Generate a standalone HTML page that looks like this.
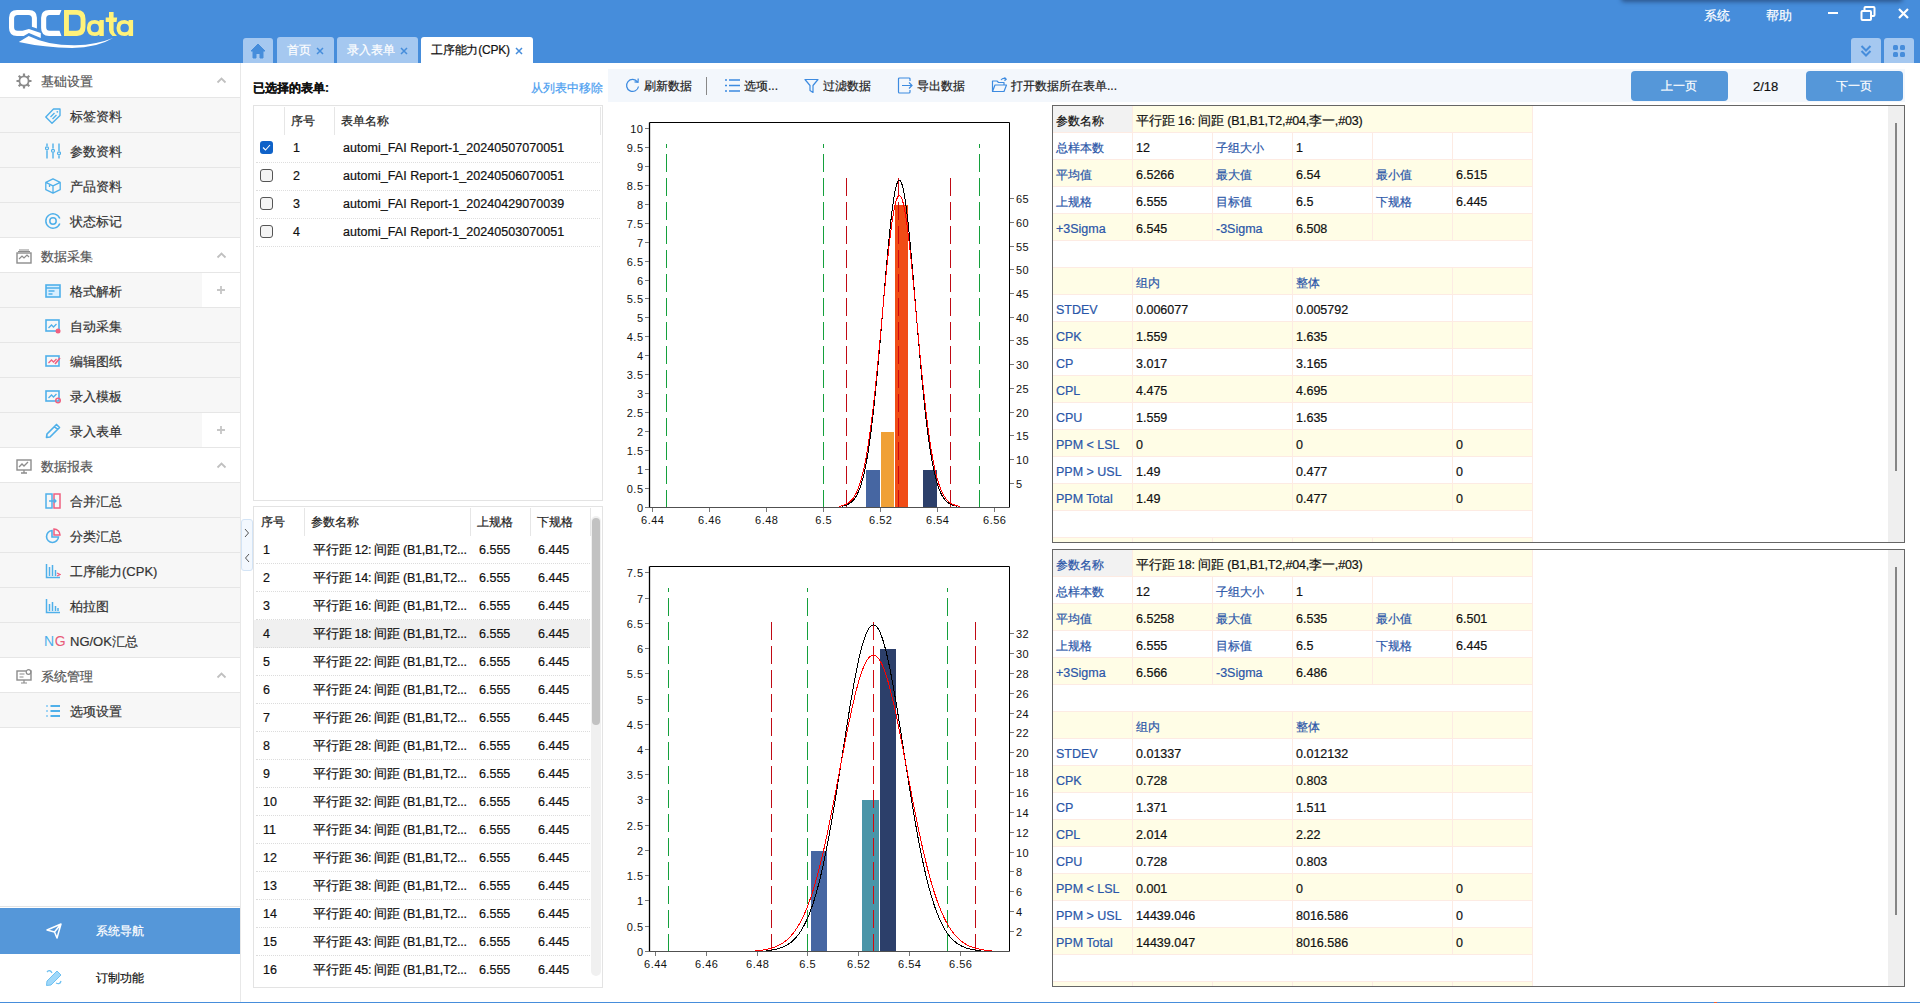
<!DOCTYPE html><html><head><meta charset="utf-8"><style>
*{box-sizing:border-box;margin:0;padding:0}
html,body{width:1920px;height:1003px;overflow:hidden;background:#fff;font-family:"Liberation Sans", sans-serif;color:#222}
.a{position:absolute}
.t{position:absolute;white-space:nowrap;line-height:1;-webkit-text-stroke:0.2px currentColor}
</style></head><body>

<div class="a" style="left:0;top:0;width:1920px;height:63px;background:#468ddb"></div>
<div class="a" style="left:1622px;top:-6px;width:280px;height:6px;background:#2f4f7a;border-radius:4px;box-shadow:0 1px 4px 1px rgba(25,45,80,.55)"></div>
<svg class="a" style="left:0;top:0" width="150" height="60" viewBox="0 0 150 60">
<path fill="#fff" fill-rule="evenodd" d="M36.9 28.6 L36.9 17.8 Q36.9 9.9 29 9.9 L17 9.9 Q9 9.9 9 17.8 L9 28 Q9 35.9 17 35.9 L23.7 35.9 L28.9 33.1 L40.8 38 L40.8 33.1 L28.9 29.1 L22.5 30.8 L17.6 30.8 Q14.1 30.8 14.1 27.3 L14.1 18.6 Q14.1 15.1 17.6 15.1 L28.4 15.1 Q31.9 15.1 31.9 18.6 L31.9 26.8 Z"/>
<path fill="#fff" d="M61.5 9.9 L49 9.9 Q41.1 9.9 41.1 17.8 L41.1 28 Q41.1 35.9 49 35.9 L61.5 35.9 L59.5 30.8 L49.7 30.8 Q46.2 30.8 46.2 27.3 L46.2 18.6 Q46.2 15.1 49.7 15.1 L59.5 15.1 Z"/>
<path fill="#fff" d="M18.8 42 L28.7 35.9 Q48 45.5 75 45.3 Q97 44.5 113 37.9 Q97 47.8 72 47.9 Q45 47.8 18.8 42 Z"/>
<g fill="#fff27a" fill-rule="evenodd">
<path d="M64 9.9 L77 9.9 Q85.5 9.9 85.5 19 L85.5 26.8 Q85.5 35.9 77 35.9 L64 35.9 Z M68.9 14.8 L68.9 30.8 L76 30.8 Q80.6 30.8 80.6 26.2 L80.6 19.4 Q80.6 14.8 76 14.8 Z"/>
<path d="M103.8 20 L99.4 20 L99.4 21.5 Q97.5 20 94.8 20 Q86.9 20 86.9 27.95 Q86.9 35.9 94.8 35.9 Q97.5 35.9 99.4 34.4 L99.4 35.9 L103.8 35.9 Z M94.8 23.7 Q90.7 23.7 90.7 27.95 Q90.7 32.2 94.8 32.2 Q98.9 32.2 98.9 27.95 Q98.9 23.7 94.8 23.7 Z"/>
<path d="M109 12 L113.6 12 L113.6 17.4 L117.2 17.4 L116.5 21.9 L113.6 21.9 L113.6 30.5 Q113.6 33 117 35.9 L112.5 35.9 Q109 33 109 30 L109 21.9 L105.7 21.9 L105.7 17.4 L109 17.4 Z"/>
<path d="M133.1 20 L128.6 20 L128.6 21.5 Q126.7 20 124.6 20 Q116.5 20 116.5 27.95 Q116.5 35.9 124.6 35.9 Q126.7 35.9 128.6 34.4 L128.6 35.9 L133.1 35.9 Z M124.6 23.7 Q120.4 23.7 120.4 27.95 Q120.4 32.2 124.6 32.2 Q128.9 32.2 128.9 27.95 Q128.9 23.7 124.6 23.7 Z"/>
</g>
</svg>
<div class="a" style="left:243px;top:38px;width:30px;height:25px;background:#a5c8f0;border-radius:3px 3px 0 0"></div>
<svg class="a" style="left:250px;top:43px" width="16" height="16" viewBox="0 0 16 16"><path d="M8 1 L15 8 L13 8 L13 15 L10 15 L10 10.5 L6 10.5 L6 15 L3 15 L3 8 L1 8 Z" fill="#468ddb" stroke="#468ddb" stroke-width="1" stroke-linejoin="round"/></svg>
<div class="a" style="left:277px;top:37px;width:57px;height:26px;background:#a5c8f0;border-radius:3px 3px 0 0"></div>
<div class="t" style="left:287px;top:44px;font-size:12px;color:#fff">首页</div>
<svg class="a" style="left:316px;top:47px" width="8" height="8" viewBox="0 0 8 8"><path d="M1 1 L7 7 M7 1 L1 7" stroke="#468ddb" stroke-width="1.5"/></svg>
<div class="a" style="left:337px;top:37px;width:81px;height:26px;background:#a5c8f0;border-radius:3px 3px 0 0"></div>
<div class="t" style="left:347px;top:44px;font-size:12px;color:#fff">录入表单</div>
<svg class="a" style="left:400px;top:47px" width="8" height="8" viewBox="0 0 8 8"><path d="M1 1 L7 7 M7 1 L1 7" stroke="#468ddb" stroke-width="1.5"/></svg>
<div class="a" style="left:421px;top:37px;width:112px;height:26px;background:#ffffff;border-radius:3px 3px 0 0"></div>
<div class="t" style="left:431px;top:44px;font-size:12px;color:#111;letter-spacing:-0.2px">工序能力(CPK)</div>
<svg class="a" style="left:515px;top:47px" width="8" height="8" viewBox="0 0 8 8"><path d="M1 1 L7 7 M7 1 L1 7" stroke="#468ddb" stroke-width="1.5"/></svg>
<div class="t" style="left:1704px;top:9px;font-size:13px;color:#fff">系统</div>
<div class="t" style="left:1766px;top:9px;font-size:13px;color:#fff">帮助</div>
<svg class="a" style="left:1820px;top:0" width="100" height="30" viewBox="0 0 100 30">
<rect x="8" y="12" width="10" height="2" fill="#fff"/>
<path d="M44.5 10.5 L44.5 8 Q44.5 7 45.5 7 L53.5 7 Q54.5 7 54.5 8 L54.5 15 Q54.5 16 53.5 16 L51 16" fill="none" stroke="#fff" stroke-width="2"/>
<rect x="41.5" y="11" width="9.5" height="9" rx="1" fill="none" stroke="#fff" stroke-width="2"/>
<path d="M79 9 L88 18 M88 9 L79 18" stroke="#fff" stroke-width="2.2"/>
</svg>
<div class="a" style="left:1851px;top:38px;width:30px;height:25px;background:#a5c8f0;border-radius:3px 3px 0 0"></div>
<div class="a" style="left:1884px;top:38px;width:30px;height:25px;background:#a5c8f0;border-radius:3px 3px 0 0"></div>
<svg class="a" style="left:1851px;top:38px" width="63" height="25" viewBox="0 0 63 25">
<path d="M10.5 8 L15 12.5 L19.5 8 M10.5 13 L15 17.5 L19.5 13" fill="none" stroke="#468ddb" stroke-width="2"/>
<rect x="42" y="7" width="5" height="5" rx="1.5" fill="#468ddb"/><rect x="49" y="7" width="5" height="5" rx="1.5" fill="#468ddb"/>
<rect x="42" y="14" width="5" height="5" rx="1.5" fill="#468ddb"/><rect x="49" y="14" width="5" height="5" rx="1.5" fill="#468ddb"/>
</svg>
<div class="a" style="left:240px;top:63px;width:1px;height:939px;background:#e8e8e8"></div>
<div class="a" style="left:0;top:63px;width:240px;height:35px;background:#ffffff;border-bottom:1px solid #e6e6e6"></div>
<svg class="a" style="left:16px;top:73px" width="16" height="16" viewBox="0 0 16 16"><circle cx="8" cy="8" r="4.6" fill="none" stroke="#8c8c8c" stroke-width="1.8"/><path d="M8 0.5v3M8 12.5v3M0.5 8h3M12.5 8h3M2.7 2.7l2.1 2.1M11.2 11.2l2.1 2.1M13.3 2.7l-2.1 2.1M4.8 11.2l-2.1 2.1" stroke="#8c8c8c" stroke-width="2.2"/></svg>
<div class="t" style="left:41px;top:75px;font-size:13px;color:#555">基础设置</div>
<svg class="a" style="left:216px;top:76px" width="12" height="8" viewBox="0 0 12 8"><path d="M1.5 6.5 L5.5 2.5 L9.5 6.5" fill="none" stroke="#c0c0c0" stroke-width="1.8"/></svg>
<div class="a" style="left:0;top:98px;width:240px;height:35px;background:#f7f7f7;border-bottom:1px solid #e6e6e6"></div>
<svg class="a" style="left:45px;top:108px" width="16" height="16" viewBox="0 0 16 16"><path d="M8.5 1 L15 1 L15 7.5 L7 15.2 L0.8 9 Z" fill="none" stroke="#4fb0ea" stroke-width="1.4" stroke-linejoin="round"/><path d="M5.5 9 L9.5 5 M7.5 11 L11.5 7" stroke="#4fb0ea" stroke-width="1.3"/><circle cx="12.3" cy="3.8" r="0.9" fill="#4fb0ea"/></svg>
<div class="t" style="left:70px;top:110px;font-size:13px;color:#333">标签资料</div>
<div class="a" style="left:0;top:133px;width:240px;height:35px;background:#f7f7f7;border-bottom:1px solid #e6e6e6"></div>
<svg class="a" style="left:45px;top:143px" width="16" height="16" viewBox="0 0 16 16"><path d="M2 0.5v2.5M2 7.5v8M8 0.5v5M8 10v5.5M14 0.5v7.5M14 12.5v3" stroke="#4fb0ea" stroke-width="1.4"/><circle cx="2" cy="5.3" r="1.5" fill="none" stroke="#4fb0ea" stroke-width="1.2"/><circle cx="8" cy="7.8" r="1.5" fill="none" stroke="#4fb0ea" stroke-width="1.2"/><circle cx="14" cy="10.3" r="1.5" fill="none" stroke="#4fb0ea" stroke-width="1.2"/></svg>
<div class="t" style="left:70px;top:145px;font-size:13px;color:#333">参数资料</div>
<div class="a" style="left:0;top:168px;width:240px;height:35px;background:#f7f7f7;border-bottom:1px solid #e6e6e6"></div>
<svg class="a" style="left:45px;top:178px" width="16" height="16" viewBox="0 0 16 16"><path d="M8 0.8 L15.2 4.3 L15.2 11.7 L8 15.2 L0.8 11.7 L0.8 4.3 Z M0.8 4.3 L8 7.8 L15.2 4.3 M8 7.8 L8 15.2 M4.5 6 L4.5 9" fill="none" stroke="#4fb0ea" stroke-width="1.3" stroke-linejoin="round"/></svg>
<div class="t" style="left:70px;top:180px;font-size:13px;color:#333">产品资料</div>
<div class="a" style="left:0;top:203px;width:240px;height:35px;background:#f7f7f7;border-bottom:1px solid #e6e6e6"></div>
<svg class="a" style="left:45px;top:213px" width="16" height="16" viewBox="0 0 16 16"><path d="M14.8 10.5 A7.2 7.2 0 1 1 14.8 5.5" fill="none" stroke="#4fb0ea" stroke-width="1.5"/><circle cx="8" cy="8" r="3.2" fill="none" stroke="#4fb0ea" stroke-width="1.5"/></svg>
<div class="t" style="left:70px;top:215px;font-size:13px;color:#333">状态标记</div>
<div class="a" style="left:0;top:238px;width:240px;height:35px;background:#ffffff;border-bottom:1px solid #e6e6e6"></div>
<svg class="a" style="left:16px;top:248px" width="16" height="16" viewBox="0 0 16 16"><rect x="1" y="5" width="14" height="10" fill="none" stroke="#8c8c8c" stroke-width="1.4"/><path d="M3 2h10M2 3.5h12M3 11l3-3 2 2 3-3 2 2" fill="none" stroke="#8c8c8c" stroke-width="1.2"/></svg>
<div class="t" style="left:41px;top:250px;font-size:13px;color:#555">数据采集</div>
<svg class="a" style="left:216px;top:251px" width="12" height="8" viewBox="0 0 12 8"><path d="M1.5 6.5 L5.5 2.5 L9.5 6.5" fill="none" stroke="#c0c0c0" stroke-width="1.8"/></svg>
<div class="a" style="left:0;top:273px;width:240px;height:35px;background:#f7f7f7;border-bottom:1px solid #e6e6e6"></div>
<svg class="a" style="left:45px;top:283px" width="16" height="16" viewBox="0 0 16 16"><rect x="1" y="2" width="14" height="12" fill="#d8efff" stroke="#4fb0ea" stroke-width="1.6"/><path d="M1 5h14M3.5 8h6M3.5 11h4" stroke="#4fb0ea" stroke-width="1.4"/></svg>
<div class="t" style="left:70px;top:285px;font-size:13px;color:#333">格式解析</div>
<div class="a" style="left:202px;top:273px;width:38px;height:34px;background:#fff"></div>
<svg class="a" style="left:216px;top:285px" width="10" height="10" viewBox="0 0 10 10"><path d="M5 1 V9 M1 5 H9" stroke="#c6c6c6" stroke-width="1.8"/></svg>
<div class="a" style="left:0;top:308px;width:240px;height:35px;background:#f7f7f7;border-bottom:1px solid #e6e6e6"></div>
<svg class="a" style="left:45px;top:318px" width="16" height="16" viewBox="0 0 16 16"><rect x="1" y="2" width="13" height="11" fill="none" stroke="#4fb0ea" stroke-width="1.6"/><path d="M3.5 10l3-3 2 2 3-3" fill="none" stroke="#4fb0ea" stroke-width="1.3"/><circle cx="13" cy="13" r="2.5" fill="#f06080"/></svg>
<div class="t" style="left:70px;top:320px;font-size:13px;color:#333">自动采集</div>
<div class="a" style="left:0;top:343px;width:240px;height:35px;background:#f7f7f7;border-bottom:1px solid #e6e6e6"></div>
<svg class="a" style="left:45px;top:353px" width="16" height="16" viewBox="0 0 16 16"><rect x="1" y="3" width="13" height="10" fill="none" stroke="#4fb0ea" stroke-width="1.6"/><path d="M3.5 10l3-3 2 2 3-3" fill="none" stroke="#f06080" stroke-width="1.3"/><path d="M10 11 L15 5" stroke="#f06080" stroke-width="1.6"/></svg>
<div class="t" style="left:70px;top:355px;font-size:13px;color:#333">编辑图纸</div>
<div class="a" style="left:0;top:378px;width:240px;height:35px;background:#f7f7f7;border-bottom:1px solid #e6e6e6"></div>
<svg class="a" style="left:45px;top:388px" width="16" height="16" viewBox="0 0 16 16"><rect x="1" y="3" width="13" height="10" fill="none" stroke="#4fb0ea" stroke-width="1.6"/><path d="M3.5 10l3-3 2 2 3-3" fill="none" stroke="#4fb0ea" stroke-width="1.3"/><circle cx="13" cy="12.5" r="2.3" fill="none" stroke="#f06080" stroke-width="1.4"/></svg>
<div class="t" style="left:70px;top:390px;font-size:13px;color:#333">录入模板</div>
<div class="a" style="left:0;top:413px;width:240px;height:35px;background:#f7f7f7;border-bottom:1px solid #e6e6e6"></div>
<svg class="a" style="left:45px;top:423px" width="16" height="16" viewBox="0 0 16 16"><path d="M11.5 1.5 L14.5 4.5 L5 14 L1.5 14.5 L2 11 Z M9.5 3.5 L12.5 6.5" fill="none" stroke="#4fb0ea" stroke-width="1.7" stroke-linejoin="round"/></svg>
<div class="t" style="left:70px;top:425px;font-size:13px;color:#333">录入表单</div>
<div class="a" style="left:202px;top:413px;width:38px;height:34px;background:#fff"></div>
<svg class="a" style="left:216px;top:425px" width="10" height="10" viewBox="0 0 10 10"><path d="M5 1 V9 M1 5 H9" stroke="#c6c6c6" stroke-width="1.8"/></svg>
<div class="a" style="left:0;top:448px;width:240px;height:35px;background:#ffffff;border-bottom:1px solid #e6e6e6"></div>
<svg class="a" style="left:16px;top:458px" width="16" height="16" viewBox="0 0 16 16"><rect x="1" y="2" width="14" height="10" fill="none" stroke="#8c8c8c" stroke-width="1.4"/><path d="M3 9l3-3 2 2 4-4M8 12v3M5 15h6" fill="none" stroke="#8c8c8c" stroke-width="1.3"/></svg>
<div class="t" style="left:41px;top:460px;font-size:13px;color:#555">数据报表</div>
<svg class="a" style="left:216px;top:461px" width="12" height="8" viewBox="0 0 12 8"><path d="M1.5 6.5 L5.5 2.5 L9.5 6.5" fill="none" stroke="#c0c0c0" stroke-width="1.8"/></svg>
<div class="a" style="left:0;top:483px;width:240px;height:35px;background:#f7f7f7;border-bottom:1px solid #e6e6e6"></div>
<svg class="a" style="left:45px;top:493px" width="16" height="16" viewBox="0 0 16 16"><rect x="1" y="1" width="6" height="14" fill="none" stroke="#4fb0ea" stroke-width="1.5"/><rect x="9" y="1" width="6" height="14" fill="none" stroke="#f06080" stroke-width="1.5"/><path d="M4 8h7M9 6l2 2-2 2" fill="none" stroke="#4fb0ea" stroke-width="1.3"/></svg>
<div class="t" style="left:70px;top:495px;font-size:13px;color:#333">合并汇总</div>
<div class="a" style="left:0;top:518px;width:240px;height:35px;background:#f7f7f7;border-bottom:1px solid #e6e6e6"></div>
<svg class="a" style="left:45px;top:528px" width="16" height="16" viewBox="0 0 16 16"><path d="M7 2.5 A6 6 0 1 0 13.5 9 L7 9 Z" fill="none" stroke="#4fb0ea" stroke-width="1.6"/><path d="M9 1 A6 6 0 0 1 15 7 L9 7 Z" fill="none" stroke="#f06080" stroke-width="1.5"/></svg>
<div class="t" style="left:70px;top:530px;font-size:13px;color:#333">分类汇总</div>
<div class="a" style="left:0;top:553px;width:240px;height:35px;background:#f7f7f7;border-bottom:1px solid #e6e6e6"></div>
<svg class="a" style="left:45px;top:563px" width="16" height="16" viewBox="0 0 16 16"><path d="M1.5 1v13.5H15" fill="none" stroke="#4fb0ea" stroke-width="1.5"/><path d="M4.5 4v9M7.5 2v11M10.5 7v6" stroke="#4fb0ea" stroke-width="1.5"/><path d="M12 10l3 1.5-3 1.5" fill="none" stroke="#f06080" stroke-width="1.3"/></svg>
<div class="t" style="left:70px;top:565px;font-size:13px;color:#333">工序能力(CPK)</div>
<div class="a" style="left:0;top:588px;width:240px;height:35px;background:#f7f7f7;border-bottom:1px solid #e6e6e6"></div>
<svg class="a" style="left:45px;top:598px" width="16" height="16" viewBox="0 0 16 16"><path d="M1.5 1v13.5H15" fill="none" stroke="#4fb0ea" stroke-width="1.5"/><path d="M4.5 6v7M7.5 4v9M10.5 8v5M13 10v3" stroke="#4fb0ea" stroke-width="1.5"/></svg>
<div class="t" style="left:70px;top:600px;font-size:13px;color:#333">柏拉图</div>
<div class="a" style="left:0;top:623px;width:240px;height:35px;background:#f7f7f7;border-bottom:1px solid #e6e6e6"></div>
<div class="t" style="left:44px;top:634px;font-size:14px;color:#4fb0ea;-webkit-text-stroke:0;letter-spacing:0.5px">N<span style="color:#e85a78">G</span></div>
<div class="t" style="left:70px;top:635px;font-size:13px;color:#333">NG/OK汇总</div>
<div class="a" style="left:0;top:658px;width:240px;height:35px;background:#ffffff;border-bottom:1px solid #e6e6e6"></div>
<svg class="a" style="left:16px;top:668px" width="16" height="16" viewBox="0 0 16 16"><rect x="1" y="3" width="14" height="9" fill="none" stroke="#8c8c8c" stroke-width="1.4"/><path d="M8 12v3M5 15h6M3.5 6h5M3.5 9h4" stroke="#8c8c8c" stroke-width="1.2"/><circle cx="12.5" cy="4" r="2.3" fill="#fff" stroke="#8c8c8c" stroke-width="1.2"/></svg>
<div class="t" style="left:41px;top:670px;font-size:13px;color:#555">系统管理</div>
<svg class="a" style="left:216px;top:671px" width="12" height="8" viewBox="0 0 12 8"><path d="M1.5 6.5 L5.5 2.5 L9.5 6.5" fill="none" stroke="#c0c0c0" stroke-width="1.8"/></svg>
<div class="a" style="left:0;top:693px;width:240px;height:35px;background:#f7f7f7;border-bottom:1px solid #e6e6e6"></div>
<svg class="a" style="left:45px;top:703px" width="16" height="16" viewBox="0 0 16 16"><path d="M5.5 3h9.5M5.5 8h9.5M5.5 13h9.5" stroke="#4fb0ea" stroke-width="1.8"/><path d="M1 3h2M1 8h2M1 13h2" stroke="#9fd4f5" stroke-width="1.8"/></svg>
<div class="t" style="left:70px;top:705px;font-size:13px;color:#333">选项设置</div>
<div class="a" style="left:0;top:906px;width:240px;height:1px;background:#e4e4e4"></div>
<div class="a" style="left:0;top:908px;width:240px;height:46px;background:#5597d9"></div>
<svg class="a" style="left:45px;top:922px" width="18" height="18" viewBox="0 0 18 18"><path d="M2 8 L16 2 L12 16 L9.5 10 Z M9.5 10 L16 2" fill="none" stroke="#fff" stroke-width="1.5" stroke-linejoin="round"/></svg>
<div class="t" style="left:96px;top:925px;font-size:12px;color:#fff">系统导航</div>
<svg class="a" style="left:45px;top:969px" width="18" height="18" viewBox="0 0 18 18"><path d="M12 2 L16 6 L6 16 L1.5 16.5 L2 12 Z" fill="#9fd8fa" stroke="#6fc0f0" stroke-width="1"/><path d="M2 3 Q5 0 7 4 M11 14 Q15 16 16 12" fill="none" stroke="#6fc0f0" stroke-width="1.3"/></svg>
<div class="t" style="left:96px;top:972px;font-size:12px;color:#111">订制功能</div>
<div class="a" style="left:0;top:1002px;width:1920px;height:1px;background:#468ddb"></div>
<div class="a" style="left:1714px;top:1002px;width:3px;height:1px;background:#f06030"></div>
<div class="t" style="left:253px;top:82px;font-size:12px;font-weight:bold;color:#111">已选择的表单:</div>
<div class="t" style="left:531px;top:82px;font-size:12px;color:#4a9ef0">从列表中移除</div>
<div class="a" style="left:253px;top:105px;width:350px;height:396px;border:1px solid #e3e3e3"></div>
<div class="a" style="left:284px;top:107px;width:1px;height:28px;background:#e6e6e6"></div>
<div class="a" style="left:334px;top:107px;width:1px;height:28px;background:#e6e6e6"></div>
<div class="a" style="left:600px;top:107px;width:1px;height:28px;background:#e6e6e6"></div>
<div class="t" style="left:291px;top:115px;font-size:12px;color:#222">序号</div>
<div class="t" style="left:341px;top:115px;font-size:12px;color:#222">表单名称</div>
<div class="a" style="left:260px;top:141px;width:13px;height:13px;background:#0f62c8;border-radius:3px"></div>
<svg class="a" style="left:260px;top:141px" width="13" height="13" viewBox="0 0 13 13"><path d="M3 6.5 L5.5 9 L10 4" fill="none" stroke="#fff" stroke-width="1.1"/></svg>
<div class="t" style="left:293px;top:142px;font-size:12.5px;color:#111">1</div>
<div class="t" style="left:343px;top:142px;font-size:12.5px;color:#111;letter-spacing:0.05px">automi_FAI Report-1_20240507070051</div>
<div class="a" style="left:256px;top:162px;width:344px;height:0;border-top:1px dotted #dedede"></div>
<div class="a" style="left:260px;top:169px;width:13px;height:13px;background:#f4f4f4;border:1px solid #555;border-radius:3px"></div>
<div class="t" style="left:293px;top:170px;font-size:12.5px;color:#111">2</div>
<div class="t" style="left:343px;top:170px;font-size:12.5px;color:#111;letter-spacing:0.05px">automi_FAI Report-1_20240506070051</div>
<div class="a" style="left:256px;top:190px;width:344px;height:0;border-top:1px dotted #dedede"></div>
<div class="a" style="left:260px;top:197px;width:13px;height:13px;background:#f4f4f4;border:1px solid #555;border-radius:3px"></div>
<div class="t" style="left:293px;top:198px;font-size:12.5px;color:#111">3</div>
<div class="t" style="left:343px;top:198px;font-size:12.5px;color:#111;letter-spacing:0.05px">automi_FAI Report-1_20240429070039</div>
<div class="a" style="left:256px;top:218px;width:344px;height:0;border-top:1px dotted #dedede"></div>
<div class="a" style="left:260px;top:225px;width:13px;height:13px;background:#f4f4f4;border:1px solid #555;border-radius:3px"></div>
<div class="t" style="left:293px;top:226px;font-size:12.5px;color:#111">4</div>
<div class="t" style="left:343px;top:226px;font-size:12.5px;color:#111;letter-spacing:0.05px">automi_FAI Report-1_20240503070051</div>
<div class="a" style="left:256px;top:246px;width:344px;height:0;border-top:1px dotted #dedede"></div>
<div class="a" style="left:253px;top:506px;width:350px;height:482px;border:1px solid #e3e3e3"></div>
<div class="a" style="left:304px;top:508px;width:1px;height:28px;background:#e6e6e6"></div>
<div class="a" style="left:470px;top:508px;width:1px;height:28px;background:#e6e6e6"></div>
<div class="a" style="left:530px;top:508px;width:1px;height:28px;background:#e6e6e6"></div>
<div class="a" style="left:590px;top:508px;width:1px;height:28px;background:#e6e6e6"></div>
<div class="t" style="left:261px;top:516px;font-size:12px;color:#222">序号</div>
<div class="t" style="left:311px;top:516px;font-size:12px;color:#222">参数名称</div>
<div class="t" style="left:477px;top:516px;font-size:12px;color:#222">上规格</div>
<div class="t" style="left:537px;top:516px;font-size:12px;color:#222">下规格</div>
<div class="t" style="left:263px;top:544px;font-size:12.5px;color:#111">1</div>
<div class="t" style="left:313px;top:544px;font-size:12.5px;color:#111;letter-spacing:-0.25px">平行距 12: 间距 (B1,B1,T2...</div>
<div class="t" style="left:479px;top:544px;font-size:12.5px;color:#111">6.555</div>
<div class="t" style="left:538px;top:544px;font-size:12.5px;color:#111">6.445</div>
<div class="a" style="left:256px;top:563px;width:334px;height:0;border-top:1px dotted #dcdcdc"></div>
<div class="t" style="left:263px;top:572px;font-size:12.5px;color:#111">2</div>
<div class="t" style="left:313px;top:572px;font-size:12.5px;color:#111;letter-spacing:-0.25px">平行距 14: 间距 (B1,B1,T2...</div>
<div class="t" style="left:479px;top:572px;font-size:12.5px;color:#111">6.555</div>
<div class="t" style="left:538px;top:572px;font-size:12.5px;color:#111">6.445</div>
<div class="a" style="left:256px;top:591px;width:334px;height:0;border-top:1px dotted #dcdcdc"></div>
<div class="t" style="left:263px;top:600px;font-size:12.5px;color:#111">3</div>
<div class="t" style="left:313px;top:600px;font-size:12.5px;color:#111;letter-spacing:-0.25px">平行距 16: 间距 (B1,B1,T2...</div>
<div class="t" style="left:479px;top:600px;font-size:12.5px;color:#111">6.555</div>
<div class="t" style="left:538px;top:600px;font-size:12.5px;color:#111">6.445</div>
<div class="a" style="left:256px;top:619px;width:334px;height:0;border-top:1px dotted #dcdcdc"></div>
<div class="a" style="left:254px;top:620px;width:336px;height:28px;background:#f0f0f0"></div>
<div class="t" style="left:263px;top:628px;font-size:12.5px;color:#111">4</div>
<div class="t" style="left:313px;top:628px;font-size:12.5px;color:#111;letter-spacing:-0.25px">平行距 18: 间距 (B1,B1,T2...</div>
<div class="t" style="left:479px;top:628px;font-size:12.5px;color:#111">6.555</div>
<div class="t" style="left:538px;top:628px;font-size:12.5px;color:#111">6.445</div>
<div class="a" style="left:256px;top:647px;width:334px;height:0;border-top:1px dotted #dcdcdc"></div>
<div class="t" style="left:263px;top:656px;font-size:12.5px;color:#111">5</div>
<div class="t" style="left:313px;top:656px;font-size:12.5px;color:#111;letter-spacing:-0.25px">平行距 22: 间距 (B1,B1,T2...</div>
<div class="t" style="left:479px;top:656px;font-size:12.5px;color:#111">6.555</div>
<div class="t" style="left:538px;top:656px;font-size:12.5px;color:#111">6.445</div>
<div class="a" style="left:256px;top:675px;width:334px;height:0;border-top:1px dotted #dcdcdc"></div>
<div class="t" style="left:263px;top:684px;font-size:12.5px;color:#111">6</div>
<div class="t" style="left:313px;top:684px;font-size:12.5px;color:#111;letter-spacing:-0.25px">平行距 24: 间距 (B1,B1,T2...</div>
<div class="t" style="left:479px;top:684px;font-size:12.5px;color:#111">6.555</div>
<div class="t" style="left:538px;top:684px;font-size:12.5px;color:#111">6.445</div>
<div class="a" style="left:256px;top:703px;width:334px;height:0;border-top:1px dotted #dcdcdc"></div>
<div class="t" style="left:263px;top:712px;font-size:12.5px;color:#111">7</div>
<div class="t" style="left:313px;top:712px;font-size:12.5px;color:#111;letter-spacing:-0.25px">平行距 26: 间距 (B1,B1,T2...</div>
<div class="t" style="left:479px;top:712px;font-size:12.5px;color:#111">6.555</div>
<div class="t" style="left:538px;top:712px;font-size:12.5px;color:#111">6.445</div>
<div class="a" style="left:256px;top:731px;width:334px;height:0;border-top:1px dotted #dcdcdc"></div>
<div class="t" style="left:263px;top:740px;font-size:12.5px;color:#111">8</div>
<div class="t" style="left:313px;top:740px;font-size:12.5px;color:#111;letter-spacing:-0.25px">平行距 28: 间距 (B1,B1,T2...</div>
<div class="t" style="left:479px;top:740px;font-size:12.5px;color:#111">6.555</div>
<div class="t" style="left:538px;top:740px;font-size:12.5px;color:#111">6.445</div>
<div class="a" style="left:256px;top:759px;width:334px;height:0;border-top:1px dotted #dcdcdc"></div>
<div class="t" style="left:263px;top:768px;font-size:12.5px;color:#111">9</div>
<div class="t" style="left:313px;top:768px;font-size:12.5px;color:#111;letter-spacing:-0.25px">平行距 30: 间距 (B1,B1,T2...</div>
<div class="t" style="left:479px;top:768px;font-size:12.5px;color:#111">6.555</div>
<div class="t" style="left:538px;top:768px;font-size:12.5px;color:#111">6.445</div>
<div class="a" style="left:256px;top:787px;width:334px;height:0;border-top:1px dotted #dcdcdc"></div>
<div class="t" style="left:263px;top:796px;font-size:12.5px;color:#111">10</div>
<div class="t" style="left:313px;top:796px;font-size:12.5px;color:#111;letter-spacing:-0.25px">平行距 32: 间距 (B1,B1,T2...</div>
<div class="t" style="left:479px;top:796px;font-size:12.5px;color:#111">6.555</div>
<div class="t" style="left:538px;top:796px;font-size:12.5px;color:#111">6.445</div>
<div class="a" style="left:256px;top:815px;width:334px;height:0;border-top:1px dotted #dcdcdc"></div>
<div class="t" style="left:263px;top:824px;font-size:12.5px;color:#111">11</div>
<div class="t" style="left:313px;top:824px;font-size:12.5px;color:#111;letter-spacing:-0.25px">平行距 34: 间距 (B1,B1,T2...</div>
<div class="t" style="left:479px;top:824px;font-size:12.5px;color:#111">6.555</div>
<div class="t" style="left:538px;top:824px;font-size:12.5px;color:#111">6.445</div>
<div class="a" style="left:256px;top:843px;width:334px;height:0;border-top:1px dotted #dcdcdc"></div>
<div class="t" style="left:263px;top:852px;font-size:12.5px;color:#111">12</div>
<div class="t" style="left:313px;top:852px;font-size:12.5px;color:#111;letter-spacing:-0.25px">平行距 36: 间距 (B1,B1,T2...</div>
<div class="t" style="left:479px;top:852px;font-size:12.5px;color:#111">6.555</div>
<div class="t" style="left:538px;top:852px;font-size:12.5px;color:#111">6.445</div>
<div class="a" style="left:256px;top:871px;width:334px;height:0;border-top:1px dotted #dcdcdc"></div>
<div class="t" style="left:263px;top:880px;font-size:12.5px;color:#111">13</div>
<div class="t" style="left:313px;top:880px;font-size:12.5px;color:#111;letter-spacing:-0.25px">平行距 38: 间距 (B1,B1,T2...</div>
<div class="t" style="left:479px;top:880px;font-size:12.5px;color:#111">6.555</div>
<div class="t" style="left:538px;top:880px;font-size:12.5px;color:#111">6.445</div>
<div class="a" style="left:256px;top:899px;width:334px;height:0;border-top:1px dotted #dcdcdc"></div>
<div class="t" style="left:263px;top:908px;font-size:12.5px;color:#111">14</div>
<div class="t" style="left:313px;top:908px;font-size:12.5px;color:#111;letter-spacing:-0.25px">平行距 40: 间距 (B1,B1,T2...</div>
<div class="t" style="left:479px;top:908px;font-size:12.5px;color:#111">6.555</div>
<div class="t" style="left:538px;top:908px;font-size:12.5px;color:#111">6.445</div>
<div class="a" style="left:256px;top:927px;width:334px;height:0;border-top:1px dotted #dcdcdc"></div>
<div class="t" style="left:263px;top:936px;font-size:12.5px;color:#111">15</div>
<div class="t" style="left:313px;top:936px;font-size:12.5px;color:#111;letter-spacing:-0.25px">平行距 43: 间距 (B1,B1,T2...</div>
<div class="t" style="left:479px;top:936px;font-size:12.5px;color:#111">6.555</div>
<div class="t" style="left:538px;top:936px;font-size:12.5px;color:#111">6.445</div>
<div class="a" style="left:256px;top:955px;width:334px;height:0;border-top:1px dotted #dcdcdc"></div>
<div class="t" style="left:263px;top:964px;font-size:12.5px;color:#111">16</div>
<div class="t" style="left:313px;top:964px;font-size:12.5px;color:#111;letter-spacing:-0.25px">平行距 45: 间距 (B1,B1,T2...</div>
<div class="t" style="left:479px;top:964px;font-size:12.5px;color:#111">6.555</div>
<div class="t" style="left:538px;top:964px;font-size:12.5px;color:#111">6.445</div>
<div class="a" style="left:591px;top:516px;width:10px;height:460px;background:#f0f0f0;border-radius:5px"></div>
<div class="a" style="left:592px;top:518px;width:8px;height:207px;background:#c2c2c2;border-radius:4px"></div>
<div class="a" style="left:241px;top:519px;width:12px;height:52px;background:#f3f8fe;border:1px solid #d3e4f6;border-radius:3px"></div>
<svg class="a" style="left:241px;top:519px" width="12" height="52" viewBox="0 0 12 52"><path d="M4 10 L7.5 14 L4 18 M8 35 L4.5 39 L8 43" fill="none" stroke="#555" stroke-width="1"/></svg>
<div class="a" style="left:608px;top:69px;width:1297px;height:33px;background:#f3f7fc"></div>
<svg class="a" style="left:624px;top:77px" width="17" height="17" viewBox="0 0 17 17"><path d="M13.5 5 A6 6 0 1 0 14.5 9.5" fill="none" stroke="#3d8be0" stroke-width="1.25"/><path d="M10.5 4.8 L14 5.2 L14.2 1.5" fill="none" stroke="#3d8be0" stroke-width="1.25"/></svg>
<div class="t" style="left:644px;top:80px;font-size:12px;color:#222">刷新数据</div>
<div class="a" style="left:706px;top:77px;width:1px;height:18px;background:#888"></div>
<svg class="a" style="left:724px;top:78px" width="17" height="15" viewBox="0 0 17 15"><path d="M5 2h11M5 7.5h11M5 13h11" stroke="#3d8be0" stroke-width="1.4"/><path d="M1 2h2M1 7.5h2M1 13h2" stroke="#3d8be0" stroke-width="1.4"/></svg>
<div class="t" style="left:744px;top:80px;font-size:12px;color:#222">选项...</div>
<svg class="a" style="left:804px;top:78px" width="15" height="16" viewBox="0 0 15 16"><path d="M1 1.5 L14 1.5 L9 7.5 L9 14.5 L6 12.5 L6 7.5 Z" fill="none" stroke="#3d8be0" stroke-width="1.2" stroke-linejoin="round"/></svg>
<div class="t" style="left:823px;top:80px;font-size:12px;color:#222">过滤数据</div>
<svg class="a" style="left:897px;top:77px" width="17" height="17" viewBox="0 0 17 17"><path d="M13 4 L13 2 Q13 1 12 1 L2.5 1 Q1.5 1 1.5 2 L1.5 15 Q1.5 16 2.5 16 L12 16 Q13 16 13 15 L13 13" fill="none" stroke="#3d8be0" stroke-width="1.2"/><path d="M5 8.5h10M12 5.5 L15 8.5 L12 11.5" fill="none" stroke="#3d8be0" stroke-width="1.2"/></svg>
<div class="t" style="left:917px;top:80px;font-size:12px;color:#222">导出数据</div>
<svg class="a" style="left:991px;top:77px" width="17" height="17" viewBox="0 0 17 17"><path d="M1.5 14.5 L1.5 4 L6 4 L7.5 5.5 L13 5.5 L13 7.5 M1.5 14.5 L4 8 L15.5 8 L13 14.5 Z" fill="none" stroke="#3d8be0" stroke-width="1.2" stroke-linejoin="round"/><path d="M10 3 Q12 0.5 15 2 M13.5 0.5 L15.2 2.2 L13.5 3.8" fill="none" stroke="#3d8be0" stroke-width="1.2"/></svg>
<div class="t" style="left:1011px;top:80px;font-size:12px;color:#222">打开数据所在表单...</div>
<div class="a" style="left:1631px;top:71px;width:97px;height:30px;background:#5597d9;border-radius:4px"></div>
<div class="t" style="left:1661px;top:80px;font-size:12px;color:#fff">上一页</div>
<div class="t" style="left:1753px;top:80px;font-size:13px;color:#111">2/18</div>
<div class="a" style="left:1806px;top:71px;width:97px;height:30px;background:#5597d9;border-radius:4px"></div>
<div class="t" style="left:1836px;top:80px;font-size:12px;color:#fff">下一页</div>
<svg class="a" style="left:0;top:0" width="1920" height="1003" viewBox="0 0 1920 1003" font-family="Liberation Sans">
<path d="M649.5 122.5 H1009.5 V507.5" fill="none" stroke="#000" stroke-width="1"/>
<path d="M649.5 122.5 V507.5" fill="none" stroke="#000" stroke-width="1.3"/>
<path d="M645 507.5 H1009.5" fill="none" stroke="#505050" stroke-width="1.2"/>
<path d="M645 507.5 H649" stroke="#777" stroke-width="1"/>
<text x="643.5" y="511.5" text-anchor="end" font-size="11" letter-spacing="0.5" fill="#111">0</text>
<path d="M645 488.5 H649" stroke="#777" stroke-width="1"/>
<text x="643.5" y="492.5" text-anchor="end" font-size="11" letter-spacing="0.5" fill="#111">0.5</text>
<path d="M645 469.5 H649" stroke="#777" stroke-width="1"/>
<text x="643.5" y="473.5" text-anchor="end" font-size="11" letter-spacing="0.5" fill="#111">1</text>
<path d="M645 450.5 H649" stroke="#777" stroke-width="1"/>
<text x="643.5" y="454.5" text-anchor="end" font-size="11" letter-spacing="0.5" fill="#111">1.5</text>
<path d="M645 431.5 H649" stroke="#777" stroke-width="1"/>
<text x="643.5" y="435.5" text-anchor="end" font-size="11" letter-spacing="0.5" fill="#111">2</text>
<path d="M645 412.5 H649" stroke="#777" stroke-width="1"/>
<text x="643.5" y="416.5" text-anchor="end" font-size="11" letter-spacing="0.5" fill="#111">2.5</text>
<path d="M645 393.5 H649" stroke="#777" stroke-width="1"/>
<text x="643.5" y="397.5" text-anchor="end" font-size="11" letter-spacing="0.5" fill="#111">3</text>
<path d="M645 374.5 H649" stroke="#777" stroke-width="1"/>
<text x="643.5" y="378.5" text-anchor="end" font-size="11" letter-spacing="0.5" fill="#111">3.5</text>
<path d="M645 355.5 H649" stroke="#777" stroke-width="1"/>
<text x="643.5" y="359.5" text-anchor="end" font-size="11" letter-spacing="0.5" fill="#111">4</text>
<path d="M645 336.5 H649" stroke="#777" stroke-width="1"/>
<text x="643.5" y="340.5" text-anchor="end" font-size="11" letter-spacing="0.5" fill="#111">4.5</text>
<path d="M645 317.5 H649" stroke="#777" stroke-width="1"/>
<text x="643.5" y="321.5" text-anchor="end" font-size="11" letter-spacing="0.5" fill="#111">5</text>
<path d="M645 298.5 H649" stroke="#777" stroke-width="1"/>
<text x="643.5" y="302.5" text-anchor="end" font-size="11" letter-spacing="0.5" fill="#111">5.5</text>
<path d="M645 280.5 H649" stroke="#777" stroke-width="1"/>
<text x="643.5" y="284.5" text-anchor="end" font-size="11" letter-spacing="0.5" fill="#111">6</text>
<path d="M645 261.5 H649" stroke="#777" stroke-width="1"/>
<text x="643.5" y="265.5" text-anchor="end" font-size="11" letter-spacing="0.5" fill="#111">6.5</text>
<path d="M645 242.5 H649" stroke="#777" stroke-width="1"/>
<text x="643.5" y="246.5" text-anchor="end" font-size="11" letter-spacing="0.5" fill="#111">7</text>
<path d="M645 223.5 H649" stroke="#777" stroke-width="1"/>
<text x="643.5" y="227.5" text-anchor="end" font-size="11" letter-spacing="0.5" fill="#111">7.5</text>
<path d="M645 204.5 H649" stroke="#777" stroke-width="1"/>
<text x="643.5" y="208.5" text-anchor="end" font-size="11" letter-spacing="0.5" fill="#111">8</text>
<path d="M645 185.5 H649" stroke="#777" stroke-width="1"/>
<text x="643.5" y="189.5" text-anchor="end" font-size="11" letter-spacing="0.5" fill="#111">8.5</text>
<path d="M645 166.5 H649" stroke="#777" stroke-width="1"/>
<text x="643.5" y="170.5" text-anchor="end" font-size="11" letter-spacing="0.5" fill="#111">9</text>
<path d="M645 147.5 H649" stroke="#777" stroke-width="1"/>
<text x="643.5" y="151.5" text-anchor="end" font-size="11" letter-spacing="0.5" fill="#111">9.5</text>
<path d="M645 128.5 H649" stroke="#777" stroke-width="1"/>
<text x="643.5" y="132.5" text-anchor="end" font-size="11" letter-spacing="0.5" fill="#111">10</text>
<path d="M1010 483.5 H1014" stroke="#777" stroke-width="1"/>
<text x="1016" y="487.5" font-size="11" letter-spacing="0.5" fill="#111">5</text>
<path d="M1010 459.5 H1014" stroke="#777" stroke-width="1"/>
<text x="1016" y="463.5" font-size="11" letter-spacing="0.5" fill="#111">10</text>
<path d="M1010 435.5 H1014" stroke="#777" stroke-width="1"/>
<text x="1016" y="439.5" font-size="11" letter-spacing="0.5" fill="#111">15</text>
<path d="M1010 412.5 H1014" stroke="#777" stroke-width="1"/>
<text x="1016" y="416.5" font-size="11" letter-spacing="0.5" fill="#111">20</text>
<path d="M1010 388.5 H1014" stroke="#777" stroke-width="1"/>
<text x="1016" y="392.5" font-size="11" letter-spacing="0.5" fill="#111">25</text>
<path d="M1010 364.5 H1014" stroke="#777" stroke-width="1"/>
<text x="1016" y="368.5" font-size="11" letter-spacing="0.5" fill="#111">30</text>
<path d="M1010 340.5 H1014" stroke="#777" stroke-width="1"/>
<text x="1016" y="344.5" font-size="11" letter-spacing="0.5" fill="#111">35</text>
<path d="M1010 317.5 H1014" stroke="#777" stroke-width="1"/>
<text x="1016" y="321.5" font-size="11" letter-spacing="0.5" fill="#111">40</text>
<path d="M1010 293.5 H1014" stroke="#777" stroke-width="1"/>
<text x="1016" y="297.5" font-size="11" letter-spacing="0.5" fill="#111">45</text>
<path d="M1010 269.5 H1014" stroke="#777" stroke-width="1"/>
<text x="1016" y="273.5" font-size="11" letter-spacing="0.5" fill="#111">50</text>
<path d="M1010 246.5 H1014" stroke="#777" stroke-width="1"/>
<text x="1016" y="250.5" font-size="11" letter-spacing="0.5" fill="#111">55</text>
<path d="M1010 222.5 H1014" stroke="#777" stroke-width="1"/>
<text x="1016" y="226.5" font-size="11" letter-spacing="0.5" fill="#111">60</text>
<path d="M1010 198.5 H1014" stroke="#777" stroke-width="1"/>
<text x="1016" y="202.5" font-size="11" letter-spacing="0.5" fill="#111">65</text>
<path d="M652.5 508 V512" stroke="#777" stroke-width="1"/>
<text x="652.75" y="524" text-anchor="middle" font-size="11" letter-spacing="0.5" fill="#111">6.44</text>
<path d="M709.5 508 V512" stroke="#777" stroke-width="1"/>
<text x="709.75" y="524" text-anchor="middle" font-size="11" letter-spacing="0.5" fill="#111">6.46</text>
<path d="M766.5 508 V512" stroke="#777" stroke-width="1"/>
<text x="766.75" y="524" text-anchor="middle" font-size="11" letter-spacing="0.5" fill="#111">6.48</text>
<path d="M823.5 508 V512" stroke="#777" stroke-width="1"/>
<text x="823.75" y="524" text-anchor="middle" font-size="11" letter-spacing="0.5" fill="#111">6.5</text>
<path d="M880.5 508 V512" stroke="#777" stroke-width="1"/>
<text x="880.75" y="524" text-anchor="middle" font-size="11" letter-spacing="0.5" fill="#111">6.52</text>
<path d="M937.5 508 V512" stroke="#777" stroke-width="1"/>
<text x="937.75" y="524" text-anchor="middle" font-size="11" letter-spacing="0.5" fill="#111">6.54</text>
<path d="M994.5 508 V512" stroke="#777" stroke-width="1"/>
<text x="994.75" y="524" text-anchor="middle" font-size="11" letter-spacing="0.5" fill="#111">6.56</text>
<rect x="866" y="470" width="14" height="37" fill="#4666a2" shape-rendering="crispEdges"/>
<rect x="881" y="432" width="13" height="75" fill="#f0a035" shape-rendering="crispEdges"/>
<rect x="895" y="205" width="13" height="302" fill="#f04c16" shape-rendering="crispEdges"/>
<rect x="923" y="470" width="14" height="37" fill="#2c3f6a" shape-rendering="crispEdges"/>
<path d="M666.5 144.0 V148.3 M666.5 154.3 V172.3 M666.5 178.3 V196.3 M666.5 202.3 V220.3 M666.5 226.3 V244.3 M666.5 250.3 V268.3 M666.5 274.3 V292.3 M666.5 298.3 V316.3 M666.5 322.3 V340.3 M666.5 346.3 V364.3 M666.5 370.3 V388.3 M666.5 394.3 V412.3 M666.5 418.3 V436.3 M666.5 442.3 V460.3 M666.5 466.3 V484.3 M666.5 490.3 V507.0" stroke="#14a03c" stroke-width="1" shape-rendering="crispEdges"/>
<path d="M823.5 144.0 V148.3 M823.5 154.3 V172.3 M823.5 178.3 V196.3 M823.5 202.3 V220.3 M823.5 226.3 V244.3 M823.5 250.3 V268.3 M823.5 274.3 V292.3 M823.5 298.3 V316.3 M823.5 322.3 V340.3 M823.5 346.3 V364.3 M823.5 370.3 V388.3 M823.5 394.3 V412.3 M823.5 418.3 V436.3 M823.5 442.3 V460.3 M823.5 466.3 V484.3 M823.5 490.3 V507.0" stroke="#14a03c" stroke-width="1" shape-rendering="crispEdges"/>
<path d="M979.5 144.0 V148.3 M979.5 154.3 V172.3 M979.5 178.3 V196.3 M979.5 202.3 V220.3 M979.5 226.3 V244.3 M979.5 250.3 V268.3 M979.5 274.3 V292.3 M979.5 298.3 V316.3 M979.5 322.3 V340.3 M979.5 346.3 V364.3 M979.5 370.3 V388.3 M979.5 394.3 V412.3 M979.5 418.3 V436.3 M979.5 442.3 V460.3 M979.5 466.3 V484.3 M979.5 490.3 V507.0" stroke="#14a03c" stroke-width="1" shape-rendering="crispEdges"/>
<path d="M846.5 178.3 V196.3 M846.5 202.3 V220.3 M846.5 226.3 V244.3 M846.5 250.3 V268.3 M846.5 274.3 V292.3 M846.5 298.3 V316.3 M846.5 322.3 V340.3 M846.5 346.3 V364.3 M846.5 370.3 V388.3 M846.5 394.3 V412.3 M846.5 418.3 V436.3 M846.5 442.3 V460.3 M846.5 466.3 V484.3 M846.5 490.3 V507.0" stroke="#c00a14" stroke-width="1" shape-rendering="crispEdges"/>
<path d="M950.5 178.3 V196.3 M950.5 202.3 V220.3 M950.5 226.3 V244.3 M950.5 250.3 V268.3 M950.5 274.3 V292.3 M950.5 298.3 V316.3 M950.5 322.3 V340.3 M950.5 346.3 V364.3 M950.5 370.3 V388.3 M950.5 394.3 V412.3 M950.5 418.3 V436.3 M950.5 442.3 V460.3 M950.5 466.3 V484.3 M950.5 490.3 V507.0" stroke="#c00a14" stroke-width="1" shape-rendering="crispEdges"/>
<path d="M898.5 178.3 V196.3 M898.5 202.3 V220.3 M898.5 226.3 V244.3 M898.5 250.3 V268.3 M898.5 274.3 V292.3 M898.5 298.3 V316.3 M898.5 322.3 V340.3 M898.5 346.3 V364.3 M898.5 370.3 V388.3 M898.5 394.3 V412.3 M898.5 418.3 V436.3 M898.5 442.3 V460.3 M898.5 466.3 V484.3 M898.5 490.3 V507.0" stroke="#d00a10" stroke-width="1" shape-rendering="crispEdges"/>
<polyline points="841.5,506.3 842.0,506.2 842.5,506.1 843.0,506.0 843.5,505.9 844.0,505.8 844.5,505.7 845.0,505.5 845.5,505.4 846.0,505.2 846.5,505.0 847.0,504.8 847.5,504.6 848.0,504.4 848.5,504.1 849.0,503.8 849.5,503.5 850.0,503.2 850.5,502.8 851.0,502.5 851.5,502.0 852.0,501.6 852.5,501.1 853.0,500.6 853.5,500.0 854.0,499.4 854.5,498.7 855.0,498.0 855.5,497.3 856.0,496.5 856.5,495.6 857.0,494.7 857.5,493.7 858.0,492.6 858.5,491.5 859.0,490.3 859.5,489.1 860.0,487.7 860.5,486.3 861.0,484.8 861.5,483.1 862.0,481.4 862.5,479.7 863.0,477.8 863.5,475.8 864.0,473.7 864.5,471.4 865.0,469.1 865.5,466.7 866.0,464.1 866.5,461.4 867.0,458.6 867.5,455.7 868.0,452.6 868.5,449.5 869.0,446.1 869.5,442.7 870.0,439.1 870.5,435.4 871.0,431.6 871.5,427.6 872.0,423.5 872.5,419.2 873.0,414.8 873.5,410.3 874.0,405.7 874.5,400.9 875.0,396.1 875.5,391.1 876.0,385.9 876.6,380.7 877.1,375.4 877.6,370.0 878.1,364.4 878.6,358.8 879.1,353.2 879.6,347.4 880.1,341.6 880.6,335.7 881.1,329.8 881.6,323.8 882.1,317.9 882.6,311.9 883.1,305.9 883.6,299.9 884.1,293.9 884.6,287.9 885.1,282.0 885.6,276.1 886.1,270.4 886.6,264.6 887.1,259.0 887.6,253.5 888.1,248.1 888.6,242.8 889.1,237.6 889.6,232.6 890.1,227.8 890.6,223.2 891.1,218.7 891.6,214.4 892.1,210.4 892.6,206.5 893.1,202.9 893.6,199.6 894.1,196.4 894.6,193.6 895.1,191.0 895.6,188.6 896.1,186.6 896.6,184.8 897.1,183.3 897.6,182.1 898.1,181.2 898.6,180.6 899.1,180.3 899.6,180.3 900.1,180.6 900.6,181.2 901.1,182.1 901.6,183.3 902.1,184.8 902.6,186.6 903.1,188.6 903.6,191.0 904.1,193.6 904.6,196.4 905.1,199.6 905.6,202.9 906.1,206.5 906.6,210.4 907.1,214.4 907.6,218.7 908.1,223.2 908.6,227.8 909.1,232.6 909.6,237.6 910.1,242.8 910.6,248.1 911.1,253.5 911.6,259.0 912.1,264.6 912.6,270.4 913.1,276.1 913.6,282.0 914.1,287.9 914.6,293.9 915.1,299.9 915.6,305.9 916.1,311.9 916.6,317.9 917.1,323.8 917.6,329.8 918.1,335.7 918.6,341.6 919.1,347.4 919.6,353.2 920.1,358.8 920.6,364.4 921.1,370.0 921.6,375.4 922.1,380.7 922.6,385.9 923.1,391.1 923.6,396.1 924.1,400.9 924.6,405.7 925.1,410.3 925.6,414.8 926.1,419.2 926.6,423.5 927.1,427.6 927.6,431.6 928.1,435.4 928.6,439.1 929.1,442.7 929.6,446.1 930.1,449.5 930.6,452.6 931.1,455.7 931.6,458.6 932.1,461.4 932.6,464.1 933.1,466.7 933.6,469.1 934.1,471.4 934.6,473.7 935.1,475.8 935.6,477.8 936.1,479.7 936.6,481.4 937.1,483.1 937.6,484.8 938.1,486.3 938.6,487.7 939.1,489.1 939.6,490.3 940.1,491.5 940.6,492.6 941.1,493.7 941.6,494.7 942.1,495.6 942.6,496.5 943.1,497.3 943.6,498.0 944.1,498.7 944.6,499.4 945.1,500.0 945.6,500.6 946.1,501.1 946.6,501.6 947.1,502.0 947.6,502.5 948.1,502.8 948.6,503.2 949.1,503.5 949.6,503.8 950.1,504.1 950.6,504.4 951.1,504.6 951.6,504.8 952.1,505.0 952.6,505.2 953.1,505.4 953.6,505.5 954.1,505.7 954.6,505.8 955.1,505.9 955.6,506.0 956.1,506.1 956.6,506.2 957.1,506.3" fill="none" stroke="#000000" stroke-width="1" shape-rendering="crispEdges"/>
<polyline points="838.7,506.3 839.2,506.2 839.7,506.2 840.2,506.1 840.7,506.0 841.2,505.9 841.7,505.8 842.2,505.6 842.7,505.5 843.2,505.4 843.7,505.2 844.2,505.0 844.7,504.8 845.2,504.6 845.7,504.4 846.2,504.2 846.7,503.9 847.2,503.6 847.7,503.3 848.2,503.0 848.7,502.7 849.2,502.3 849.7,501.9 850.2,501.4 850.7,501.0 851.2,500.5 851.7,499.9 852.2,499.3 852.7,498.7 853.2,498.1 853.7,497.3 854.2,496.6 854.7,495.8 855.2,494.9 855.7,494.0 856.2,493.0 856.7,492.0 857.2,490.9 857.7,489.7 858.1,488.5 858.6,487.2 859.1,485.8 859.6,484.4 860.1,482.9 860.6,481.2 861.1,479.5 861.6,477.7 862.1,475.9 862.6,473.9 863.1,471.8 863.6,469.7 864.1,467.4 864.6,465.0 865.1,462.6 865.6,460.0 866.1,457.3 866.6,454.5 867.1,451.6 867.6,448.6 868.1,445.4 868.6,442.2 869.1,438.8 869.6,435.3 870.1,431.7 870.6,428.0 871.1,424.2 871.6,420.3 872.1,416.2 872.6,412.0 873.1,407.8 873.6,403.4 874.1,398.9 874.6,394.3 875.1,389.7 875.6,384.9 876.1,380.0 876.6,375.1 877.1,370.1 877.6,365.0 878.1,359.8 878.6,354.6 879.1,349.3 879.6,344.0 880.1,338.7 880.6,333.3 881.1,327.9 881.6,322.4 882.1,317.0 882.6,311.5 883.1,306.1 883.6,300.7 884.1,295.3 884.6,290.0 885.1,284.7 885.6,279.5 886.1,274.3 886.6,269.3 887.1,264.3 887.6,259.4 888.1,254.6 888.6,250.0 889.1,245.5 889.6,241.1 890.1,236.9 890.6,232.8 891.1,228.9 891.6,225.2 892.1,221.6 892.6,218.3 893.1,215.2 893.6,212.3 894.1,209.6 894.6,207.1 895.1,204.8 895.6,202.8 896.1,201.0 896.6,199.5 897.1,198.2 897.6,197.2 898.1,196.4 898.6,195.9 899.1,195.7 899.6,195.7 900.1,195.9 900.6,196.4 901.1,197.2 901.6,198.2 902.1,199.5 902.6,201.0 903.1,202.8 903.6,204.8 904.0,207.1 904.5,209.6 905.0,212.3 905.5,215.2 906.0,218.3 906.5,221.6 907.0,225.2 907.5,228.9 908.0,232.8 908.5,236.9 909.0,241.1 909.5,245.5 910.0,250.0 910.5,254.6 911.0,259.4 911.5,264.3 912.0,269.3 912.5,274.3 913.0,279.5 913.5,284.7 914.0,290.0 914.5,295.3 915.0,300.7 915.5,306.1 916.0,311.5 916.5,317.0 917.0,322.4 917.5,327.9 918.0,333.3 918.5,338.7 919.0,344.0 919.5,349.3 920.0,354.6 920.5,359.8 921.0,365.0 921.5,370.1 922.0,375.1 922.5,380.0 923.0,384.9 923.5,389.7 924.0,394.3 924.5,398.9 925.0,403.4 925.5,407.8 926.0,412.0 926.5,416.2 927.0,420.3 927.5,424.2 928.0,428.0 928.5,431.7 929.0,435.3 929.5,438.8 930.0,442.2 930.5,445.4 931.0,448.6 931.5,451.6 932.0,454.5 932.5,457.3 933.0,460.0 933.5,462.6 934.0,465.0 934.5,467.4 935.0,469.7 935.5,471.8 936.0,473.9 936.5,475.9 937.0,477.7 937.5,479.5 938.0,481.2 938.5,482.9 939.0,484.4 939.5,485.8 940.0,487.2 940.5,488.5 941.0,489.7 941.5,490.9 942.0,492.0 942.5,493.0 943.0,494.0 943.5,494.9 944.0,495.8 944.5,496.6 945.0,497.3 945.5,498.1 946.0,498.7 946.5,499.3 947.0,499.9 947.5,500.5 948.0,501.0 948.5,501.4 949.0,501.9 949.5,502.3 949.9,502.7 950.4,503.0 950.9,503.3 951.4,503.6 951.9,503.9 952.4,504.2 952.9,504.4 953.4,504.6 953.9,504.8 954.4,505.0 954.9,505.2 955.4,505.4 955.9,505.5 956.4,505.6 956.9,505.8 957.4,505.9 957.9,506.0 958.4,506.1 958.9,506.2 959.4,506.2 959.9,506.3" fill="none" stroke="#ff0000" stroke-width="1" shape-rendering="crispEdges"/>
<path d="M649.5 566.5 H1009.5 V951.5" fill="none" stroke="#000" stroke-width="1"/>
<path d="M649.5 566.5 V951.5" fill="none" stroke="#000" stroke-width="1.3"/>
<path d="M645 951.5 H1009.5" fill="none" stroke="#505050" stroke-width="1.2"/>
<path d="M645 951.5 H649" stroke="#777" stroke-width="1"/>
<text x="643.5" y="955.5" text-anchor="end" font-size="11" letter-spacing="0.5" fill="#111">0</text>
<path d="M645 926.5 H649" stroke="#777" stroke-width="1"/>
<text x="643.5" y="930.5" text-anchor="end" font-size="11" letter-spacing="0.5" fill="#111">0.5</text>
<path d="M645 900.5 H649" stroke="#777" stroke-width="1"/>
<text x="643.5" y="904.5" text-anchor="end" font-size="11" letter-spacing="0.5" fill="#111">1</text>
<path d="M645 875.5 H649" stroke="#777" stroke-width="1"/>
<text x="643.5" y="879.5" text-anchor="end" font-size="11" letter-spacing="0.5" fill="#111">1.5</text>
<path d="M645 850.5 H649" stroke="#777" stroke-width="1"/>
<text x="643.5" y="854.5" text-anchor="end" font-size="11" letter-spacing="0.5" fill="#111">2</text>
<path d="M645 825.5 H649" stroke="#777" stroke-width="1"/>
<text x="643.5" y="829.5" text-anchor="end" font-size="11" letter-spacing="0.5" fill="#111">2.5</text>
<path d="M645 799.5 H649" stroke="#777" stroke-width="1"/>
<text x="643.5" y="803.5" text-anchor="end" font-size="11" letter-spacing="0.5" fill="#111">3</text>
<path d="M645 774.5 H649" stroke="#777" stroke-width="1"/>
<text x="643.5" y="778.5" text-anchor="end" font-size="11" letter-spacing="0.5" fill="#111">3.5</text>
<path d="M645 749.5 H649" stroke="#777" stroke-width="1"/>
<text x="643.5" y="753.5" text-anchor="end" font-size="11" letter-spacing="0.5" fill="#111">4</text>
<path d="M645 724.5 H649" stroke="#777" stroke-width="1"/>
<text x="643.5" y="728.5" text-anchor="end" font-size="11" letter-spacing="0.5" fill="#111">4.5</text>
<path d="M645 699.5 H649" stroke="#777" stroke-width="1"/>
<text x="643.5" y="703.5" text-anchor="end" font-size="11" letter-spacing="0.5" fill="#111">5</text>
<path d="M645 673.5 H649" stroke="#777" stroke-width="1"/>
<text x="643.5" y="677.5" text-anchor="end" font-size="11" letter-spacing="0.5" fill="#111">5.5</text>
<path d="M645 648.5 H649" stroke="#777" stroke-width="1"/>
<text x="643.5" y="652.5" text-anchor="end" font-size="11" letter-spacing="0.5" fill="#111">6</text>
<path d="M645 623.5 H649" stroke="#777" stroke-width="1"/>
<text x="643.5" y="627.5" text-anchor="end" font-size="11" letter-spacing="0.5" fill="#111">6.5</text>
<path d="M645 598.5 H649" stroke="#777" stroke-width="1"/>
<text x="643.5" y="602.5" text-anchor="end" font-size="11" letter-spacing="0.5" fill="#111">7</text>
<path d="M645 572.5 H649" stroke="#777" stroke-width="1"/>
<text x="643.5" y="576.5" text-anchor="end" font-size="11" letter-spacing="0.5" fill="#111">7.5</text>
<path d="M1010 931.5 H1014" stroke="#777" stroke-width="1"/>
<text x="1016" y="935.5" font-size="11" letter-spacing="0.5" fill="#111">2</text>
<path d="M1010 911.5 H1014" stroke="#777" stroke-width="1"/>
<text x="1016" y="915.5" font-size="11" letter-spacing="0.5" fill="#111">4</text>
<path d="M1010 891.5 H1014" stroke="#777" stroke-width="1"/>
<text x="1016" y="895.5" font-size="11" letter-spacing="0.5" fill="#111">6</text>
<path d="M1010 871.5 H1014" stroke="#777" stroke-width="1"/>
<text x="1016" y="875.5" font-size="11" letter-spacing="0.5" fill="#111">8</text>
<path d="M1010 852.5 H1014" stroke="#777" stroke-width="1"/>
<text x="1016" y="856.5" font-size="11" letter-spacing="0.5" fill="#111">10</text>
<path d="M1010 832.5 H1014" stroke="#777" stroke-width="1"/>
<text x="1016" y="836.5" font-size="11" letter-spacing="0.5" fill="#111">12</text>
<path d="M1010 812.5 H1014" stroke="#777" stroke-width="1"/>
<text x="1016" y="816.5" font-size="11" letter-spacing="0.5" fill="#111">14</text>
<path d="M1010 792.5 H1014" stroke="#777" stroke-width="1"/>
<text x="1016" y="796.5" font-size="11" letter-spacing="0.5" fill="#111">16</text>
<path d="M1010 772.5 H1014" stroke="#777" stroke-width="1"/>
<text x="1016" y="776.5" font-size="11" letter-spacing="0.5" fill="#111">18</text>
<path d="M1010 752.5 H1014" stroke="#777" stroke-width="1"/>
<text x="1016" y="756.5" font-size="11" letter-spacing="0.5" fill="#111">20</text>
<path d="M1010 732.5 H1014" stroke="#777" stroke-width="1"/>
<text x="1016" y="736.5" font-size="11" letter-spacing="0.5" fill="#111">22</text>
<path d="M1010 713.5 H1014" stroke="#777" stroke-width="1"/>
<text x="1016" y="717.5" font-size="11" letter-spacing="0.5" fill="#111">24</text>
<path d="M1010 693.5 H1014" stroke="#777" stroke-width="1"/>
<text x="1016" y="697.5" font-size="11" letter-spacing="0.5" fill="#111">26</text>
<path d="M1010 673.5 H1014" stroke="#777" stroke-width="1"/>
<text x="1016" y="677.5" font-size="11" letter-spacing="0.5" fill="#111">28</text>
<path d="M1010 653.5 H1014" stroke="#777" stroke-width="1"/>
<text x="1016" y="657.5" font-size="11" letter-spacing="0.5" fill="#111">30</text>
<path d="M1010 633.5 H1014" stroke="#777" stroke-width="1"/>
<text x="1016" y="637.5" font-size="11" letter-spacing="0.5" fill="#111">32</text>
<path d="M655.5 952 V956" stroke="#777" stroke-width="1"/>
<text x="655.75" y="968" text-anchor="middle" font-size="11" letter-spacing="0.5" fill="#111">6.44</text>
<path d="M706.5 952 V956" stroke="#777" stroke-width="1"/>
<text x="706.75" y="968" text-anchor="middle" font-size="11" letter-spacing="0.5" fill="#111">6.46</text>
<path d="M757.5 952 V956" stroke="#777" stroke-width="1"/>
<text x="757.75" y="968" text-anchor="middle" font-size="11" letter-spacing="0.5" fill="#111">6.48</text>
<path d="M807.5 952 V956" stroke="#777" stroke-width="1"/>
<text x="807.75" y="968" text-anchor="middle" font-size="11" letter-spacing="0.5" fill="#111">6.5</text>
<path d="M858.5 952 V956" stroke="#777" stroke-width="1"/>
<text x="858.75" y="968" text-anchor="middle" font-size="11" letter-spacing="0.5" fill="#111">6.52</text>
<path d="M909.5 952 V956" stroke="#777" stroke-width="1"/>
<text x="909.75" y="968" text-anchor="middle" font-size="11" letter-spacing="0.5" fill="#111">6.54</text>
<path d="M960.5 952 V956" stroke="#777" stroke-width="1"/>
<text x="960.75" y="968" text-anchor="middle" font-size="11" letter-spacing="0.5" fill="#111">6.56</text>
<rect x="811" y="851" width="16" height="100" fill="#4666a2" shape-rendering="crispEdges"/>
<rect x="862" y="800" width="17" height="151" fill="#4a95a8" shape-rendering="crispEdges"/>
<rect x="880" y="649" width="16" height="302" fill="#2c3f6a" shape-rendering="crispEdges"/>
<path d="M668.5 588.0 V592.3 M668.5 598.3 V616.3 M668.5 622.3 V640.3 M668.5 646.3 V664.3 M668.5 670.3 V688.3 M668.5 694.3 V712.3 M668.5 718.3 V736.3 M668.5 742.3 V760.3 M668.5 766.3 V784.3 M668.5 790.3 V808.3 M668.5 814.3 V832.3 M668.5 838.3 V856.3 M668.5 862.3 V880.3 M668.5 886.3 V904.3 M668.5 910.3 V928.3 M668.5 934.3 V951.0" stroke="#14a03c" stroke-width="1" shape-rendering="crispEdges"/>
<path d="M807.5 588.0 V592.3 M807.5 598.3 V616.3 M807.5 622.3 V640.3 M807.5 646.3 V664.3 M807.5 670.3 V688.3 M807.5 694.3 V712.3 M807.5 718.3 V736.3 M807.5 742.3 V760.3 M807.5 766.3 V784.3 M807.5 790.3 V808.3 M807.5 814.3 V832.3 M807.5 838.3 V856.3 M807.5 862.3 V880.3 M807.5 886.3 V904.3 M807.5 910.3 V928.3 M807.5 934.3 V951.0" stroke="#14a03c" stroke-width="1" shape-rendering="crispEdges"/>
<path d="M947.5 588.0 V592.3 M947.5 598.3 V616.3 M947.5 622.3 V640.3 M947.5 646.3 V664.3 M947.5 670.3 V688.3 M947.5 694.3 V712.3 M947.5 718.3 V736.3 M947.5 742.3 V760.3 M947.5 766.3 V784.3 M947.5 790.3 V808.3 M947.5 814.3 V832.3 M947.5 838.3 V856.3 M947.5 862.3 V880.3 M947.5 886.3 V904.3 M947.5 910.3 V928.3 M947.5 934.3 V951.0" stroke="#14a03c" stroke-width="1" shape-rendering="crispEdges"/>
<path d="M771.5 622.3 V640.3 M771.5 646.3 V664.3 M771.5 670.3 V688.3 M771.5 694.3 V712.3 M771.5 718.3 V736.3 M771.5 742.3 V760.3 M771.5 766.3 V784.3 M771.5 790.3 V808.3 M771.5 814.3 V832.3 M771.5 838.3 V856.3 M771.5 862.3 V880.3 M771.5 886.3 V904.3 M771.5 910.3 V928.3 M771.5 934.3 V951.0" stroke="#c00a14" stroke-width="1" shape-rendering="crispEdges"/>
<path d="M975.5 622.3 V640.3 M975.5 646.3 V664.3 M975.5 670.3 V688.3 M975.5 694.3 V712.3 M975.5 718.3 V736.3 M975.5 742.3 V760.3 M975.5 766.3 V784.3 M975.5 790.3 V808.3 M975.5 814.3 V832.3 M975.5 838.3 V856.3 M975.5 862.3 V880.3 M975.5 886.3 V904.3 M975.5 910.3 V928.3 M975.5 934.3 V951.0" stroke="#c00a14" stroke-width="1" shape-rendering="crispEdges"/>
<path d="M873.5 622.3 V640.3 M873.5 646.3 V664.3 M873.5 670.3 V688.3 M873.5 694.3 V712.3 M873.5 718.3 V736.3 M873.5 742.3 V760.3 M873.5 766.3 V784.3 M873.5 790.3 V808.3 M873.5 814.3 V832.3 M873.5 838.3 V856.3 M873.5 862.3 V880.3 M873.5 886.3 V904.3 M873.5 910.3 V928.3 M873.5 934.3 V951.0" stroke="#d00a10" stroke-width="1" shape-rendering="crispEdges"/>
<polyline points="765.6,950.7 766.1,950.6 766.6,950.6 767.1,950.6 767.6,950.5 768.1,950.5 768.6,950.4 769.1,950.3 769.6,950.3 770.1,950.2 770.6,950.2 771.1,950.1 771.6,950.0 772.1,949.9 772.6,949.9 773.1,949.8 773.6,949.7 774.1,949.6 774.6,949.5 775.1,949.4 775.6,949.3 776.1,949.2 776.6,949.1 777.1,948.9 777.6,948.8 778.1,948.7 778.6,948.5 779.1,948.4 779.6,948.2 780.1,948.1 780.6,947.9 781.1,947.7 781.6,947.6 782.1,947.4 782.6,947.2 783.1,947.0 783.6,946.7 784.1,946.5 784.6,946.3 785.1,946.0 785.6,945.8 786.1,945.5 786.6,945.2 787.1,945.0 787.6,944.7 788.1,944.3 788.6,944.0 789.1,943.7 789.6,943.3 790.1,943.0 790.6,942.6 791.1,942.2 791.6,941.8 792.1,941.4 792.6,940.9 793.1,940.5 793.6,940.0 794.1,939.5 794.6,939.0 795.1,938.5 795.6,937.9 796.1,937.4 796.6,936.8 797.1,936.2 797.6,935.6 798.1,934.9 798.6,934.3 799.1,933.6 799.6,932.9 800.1,932.1 800.6,931.4 801.1,930.6 801.6,929.8 802.1,929.0 802.6,928.1 803.1,927.2 803.6,926.3 804.1,925.4 804.6,924.4 805.1,923.4 805.6,922.4 806.1,921.4 806.6,920.3 807.1,919.2 807.6,918.0 808.1,916.8 808.6,915.6 809.1,914.4 809.6,913.1 810.1,911.8 810.6,910.5 811.1,909.1 811.6,907.7 812.1,906.3 812.6,904.8 813.1,903.3 813.6,901.7 814.1,900.2 814.6,898.5 815.1,896.9 815.6,895.2 816.1,893.5 816.6,891.7 817.1,889.9 817.6,888.0 818.1,886.2 818.6,884.2 819.1,882.3 819.6,880.3 820.1,878.2 820.6,876.2 821.1,874.1 821.6,871.9 822.1,869.7 822.6,867.5 823.1,865.2 823.6,862.9 824.1,860.6 824.6,858.2 825.1,855.8 825.6,853.3 826.1,850.8 826.6,848.3 827.1,845.8 827.6,843.2 828.1,840.5 828.6,837.9 829.1,835.2 829.6,832.4 830.1,829.7 830.6,826.9 831.1,824.1 831.6,821.2 832.1,818.3 832.6,815.4 833.1,812.5 833.6,809.5 834.1,806.5 834.6,803.5 835.1,800.5 835.6,797.4 836.1,794.4 836.6,791.3 837.1,788.1 837.6,785.0 838.1,781.9 838.6,778.7 839.1,775.5 839.6,772.4 840.1,769.2 840.6,766.0 841.1,762.8 841.6,759.5 842.1,756.3 842.6,753.1 843.1,749.9 843.6,746.7 844.1,743.5 844.6,740.3 845.1,737.1 845.6,733.9 846.1,730.7 846.6,727.5 847.1,724.4 847.6,721.3 848.1,718.1 848.6,715.0 849.1,712.0 849.6,708.9 850.1,705.9 850.6,702.9 851.1,699.9 851.6,697.0 852.1,694.1 852.6,691.2 853.1,688.4 853.6,685.6 854.1,682.9 854.6,680.1 855.1,677.5 855.6,674.9 856.1,672.3 856.6,669.8 857.1,667.3 857.6,664.9 858.1,662.6 858.6,660.3 859.1,658.0 859.6,655.9 860.1,653.8 860.6,651.7 861.1,649.7 861.6,647.8 862.1,646.0 862.6,644.2 863.1,642.5 863.6,640.8 864.1,639.3 864.6,637.8 865.1,636.4 865.6,635.1 866.1,633.8 866.6,632.6 867.1,631.5 867.6,630.5 868.1,629.6 868.6,628.7 869.1,628.0 869.6,627.3 870.1,626.7 870.6,626.2 871.1,625.7 871.6,625.4 872.1,625.1 872.6,625.0 873.1,624.9 873.6,624.9 874.1,625.0 874.6,625.1 875.1,625.4 875.6,625.7 876.1,626.2 876.6,626.7 877.1,627.3 877.6,628.0 878.1,628.7 878.6,629.6 879.1,630.5 879.6,631.5 880.1,632.6 880.6,633.8 881.1,635.1 881.6,636.4 882.1,637.8 882.6,639.3 883.1,640.8 883.6,642.5 884.1,644.2 884.6,646.0 885.1,647.8 885.6,649.7 886.1,651.7 886.6,653.8 887.1,655.9 887.6,658.0 888.1,660.3 888.6,662.6 889.1,664.9 889.6,667.3 890.1,669.8 890.6,672.3 891.1,674.9 891.6,677.5 892.1,680.1 892.6,682.9 893.1,685.6 893.6,688.4 894.1,691.2 894.6,694.1 895.1,697.0 895.6,699.9 896.1,702.9 896.6,705.9 897.1,708.9 897.6,712.0 898.1,715.0 898.6,718.1 899.1,721.3 899.6,724.4 900.1,727.5 900.6,730.7 901.1,733.9 901.6,737.1 902.1,740.3 902.6,743.5 903.1,746.7 903.6,749.9 904.1,753.1 904.6,756.3 905.1,759.5 905.6,762.8 906.1,766.0 906.6,769.2 907.1,772.4 907.6,775.5 908.1,778.7 908.6,781.9 909.1,785.0 909.6,788.1 910.1,791.3 910.6,794.4 911.1,797.4 911.6,800.5 912.1,803.5 912.6,806.5 913.1,809.5 913.6,812.5 914.1,815.4 914.6,818.3 915.1,821.2 915.6,824.1 916.1,826.9 916.6,829.7 917.1,832.4 917.6,835.2 918.1,837.9 918.6,840.5 919.1,843.2 919.6,845.8 920.1,848.3 920.6,850.8 921.1,853.3 921.6,855.8 922.1,858.2 922.6,860.6 923.1,862.9 923.6,865.2 924.1,867.5 924.6,869.7 925.1,871.9 925.6,874.1 926.1,876.2 926.6,878.2 927.1,880.3 927.6,882.3 928.1,884.2 928.6,886.2 929.1,888.0 929.6,889.9 930.1,891.7 930.6,893.5 931.1,895.2 931.6,896.9 932.1,898.5 932.6,900.2 933.1,901.7 933.6,903.3 934.1,904.8 934.6,906.3 935.1,907.7 935.6,909.1 936.1,910.5 936.6,911.8 937.1,913.1 937.6,914.4 938.1,915.6 938.6,916.8 939.1,918.0 939.6,919.2 940.1,920.3 940.6,921.4 941.1,922.4 941.6,923.4 942.1,924.4 942.6,925.4 943.1,926.3 943.6,927.2 944.1,928.1 944.6,929.0 945.1,929.8 945.6,930.6 946.1,931.4 946.6,932.1 947.1,932.9 947.6,933.6 948.1,934.3 948.6,934.9 949.1,935.6 949.6,936.2 950.1,936.8 950.6,937.4 951.1,937.9 951.6,938.5 952.1,939.0 952.6,939.5 953.1,940.0 953.6,940.5 954.1,940.9 954.6,941.4 955.1,941.8 955.6,942.2 956.1,942.6 956.6,943.0 957.1,943.3 957.6,943.7 958.1,944.0 958.6,944.3 959.1,944.7 959.6,945.0 960.1,945.2 960.6,945.5 961.1,945.8 961.6,946.0 962.1,946.3 962.6,946.5 963.1,946.7 963.6,947.0 964.1,947.2 964.6,947.4 965.1,947.6 965.6,947.7 966.1,947.9 966.6,948.1 967.1,948.2 967.6,948.4 968.1,948.5 968.6,948.7 969.1,948.8 969.6,948.9 970.1,949.1 970.6,949.2 971.1,949.3 971.6,949.4 972.1,949.5 972.6,949.6 973.1,949.7 973.6,949.8 974.1,949.9 974.6,949.9 975.1,950.0 975.6,950.1 976.1,950.2 976.6,950.2 977.1,950.3 977.6,950.3 978.1,950.4 978.6,950.5 979.1,950.5 979.6,950.6 980.1,950.6 980.6,950.6 981.1,950.7" fill="none" stroke="#000000" stroke-width="1" shape-rendering="crispEdges"/>
<polyline points="754.6,950.8 755.1,950.7 755.6,950.7 756.1,950.6 756.6,950.6 757.1,950.6 757.6,950.5 758.1,950.5 758.6,950.4 759.1,950.4 759.6,950.3 760.1,950.3 760.6,950.2 761.1,950.2 761.6,950.1 762.1,950.0 762.6,950.0 763.1,949.9 763.6,949.8 764.1,949.7 764.6,949.7 765.1,949.6 765.6,949.5 766.1,949.4 766.6,949.3 767.1,949.2 767.6,949.1 768.1,949.0 768.6,948.9 769.1,948.8 769.6,948.6 770.1,948.5 770.6,948.4 771.1,948.2 771.6,948.1 772.1,947.9 772.6,947.8 773.1,947.6 773.6,947.5 774.1,947.3 774.6,947.1 775.1,946.9 775.6,946.7 776.1,946.5 776.6,946.3 777.1,946.1 777.6,945.9 778.1,945.6 778.6,945.4 779.1,945.1 779.6,944.9 780.1,944.6 780.6,944.3 781.1,944.0 781.6,943.7 782.1,943.4 782.6,943.1 783.1,942.8 783.6,942.4 784.1,942.1 784.6,941.7 785.1,941.3 785.6,940.9 786.1,940.5 786.6,940.1 787.1,939.7 787.6,939.2 788.1,938.8 788.6,938.3 789.1,937.8 789.6,937.3 790.1,936.8 790.6,936.3 791.1,935.7 791.6,935.1 792.1,934.6 792.6,934.0 793.1,933.3 793.6,932.7 794.1,932.0 794.6,931.4 795.1,930.7 795.6,930.0 796.1,929.2 796.6,928.5 797.1,927.7 797.6,926.9 798.1,926.1 798.6,925.2 799.1,924.4 799.6,923.5 800.1,922.6 800.6,921.7 801.1,920.7 801.6,919.7 802.1,918.7 802.6,917.7 803.1,916.7 803.6,915.6 804.1,914.5 804.6,913.4 805.1,912.2 805.6,911.0 806.1,909.8 806.6,908.6 807.1,907.4 807.6,906.1 808.1,904.8 808.6,903.4 809.1,902.1 809.6,900.7 810.1,899.3 810.6,897.8 811.1,896.4 811.6,894.8 812.1,893.3 812.6,891.8 813.1,890.2 813.6,888.6 814.1,886.9 814.6,885.2 815.1,883.5 815.6,881.8 816.1,880.0 816.6,878.2 817.1,876.4 817.6,874.6 818.1,872.7 818.6,870.8 819.1,868.9 819.6,866.9 820.1,864.9 820.6,862.9 821.1,860.9 821.6,858.8 822.1,856.7 822.6,854.6 823.1,852.5 823.6,850.3 824.1,848.1 824.6,845.9 825.1,843.6 825.6,841.3 826.1,839.0 826.6,836.7 827.1,834.4 827.6,832.0 828.1,829.6 828.6,827.2 829.1,824.8 829.6,822.4 830.1,819.9 830.6,817.4 831.1,814.9 831.6,812.4 832.1,809.9 832.6,807.4 833.1,804.8 833.6,802.2 834.1,799.7 834.6,797.1 835.1,794.5 835.6,791.8 836.1,789.2 836.6,786.6 837.1,784.0 837.6,781.3 838.1,778.7 838.6,776.0 839.1,773.4 839.6,770.7 840.1,768.1 840.6,765.4 841.1,762.8 841.6,760.2 842.1,757.5 842.6,754.9 843.1,752.3 843.6,749.7 844.1,747.1 844.6,744.5 845.1,741.9 845.6,739.3 846.1,736.8 846.6,734.3 847.1,731.7 847.6,729.2 848.1,726.8 848.6,724.3 849.1,721.9 849.6,719.5 850.1,717.1 850.6,714.8 851.1,712.4 851.6,710.1 852.1,707.9 852.6,705.6 853.1,703.4 853.6,701.3 854.1,699.2 854.6,697.1 855.1,695.0 855.6,693.0 856.1,691.0 856.6,689.1 857.1,687.2 857.6,685.4 858.1,683.6 858.6,681.8 859.1,680.1 859.6,678.5 860.1,676.9 860.6,675.3 861.1,673.8 861.6,672.3 862.1,671.0 862.6,669.6 863.1,668.3 863.6,667.1 864.1,665.9 864.6,664.8 865.1,663.7 865.6,662.7 866.1,661.8 866.6,660.9 867.1,660.1 867.6,659.3 868.1,658.6 868.6,658.0 869.1,657.4 869.6,656.9 870.1,656.5 870.6,656.1 871.1,655.8 871.6,655.5 872.1,655.3 872.6,655.2 873.1,655.1 873.6,655.1 874.1,655.2 874.6,655.3 875.1,655.5 875.6,655.8 876.1,656.1 876.6,656.5 877.1,656.9 877.6,657.4 878.1,658.0 878.6,658.6 879.1,659.3 879.6,660.1 880.1,660.9 880.6,661.8 881.1,662.7 881.6,663.7 882.1,664.8 882.6,665.9 883.1,667.1 883.6,668.3 884.1,669.6 884.6,671.0 885.1,672.3 885.6,673.8 886.1,675.3 886.6,676.9 887.1,678.5 887.6,680.1 888.1,681.8 888.6,683.6 889.1,685.4 889.6,687.2 890.1,689.1 890.6,691.0 891.1,693.0 891.6,695.0 892.1,697.1 892.6,699.2 893.1,701.3 893.6,703.4 894.1,705.6 894.6,707.9 895.1,710.1 895.6,712.4 896.1,714.8 896.6,717.1 897.1,719.5 897.6,721.9 898.1,724.3 898.6,726.8 899.1,729.2 899.6,731.7 900.1,734.3 900.6,736.8 901.1,739.3 901.6,741.9 902.1,744.5 902.6,747.1 903.1,749.7 903.6,752.3 904.1,754.9 904.6,757.5 905.1,760.2 905.6,762.8 906.1,765.4 906.6,768.1 907.1,770.7 907.6,773.4 908.1,776.0 908.6,778.7 909.1,781.3 909.6,784.0 910.1,786.6 910.6,789.2 911.1,791.8 911.6,794.5 912.1,797.1 912.6,799.7 913.1,802.2 913.6,804.8 914.1,807.4 914.6,809.9 915.1,812.4 915.6,814.9 916.1,817.4 916.6,819.9 917.1,822.4 917.6,824.8 918.1,827.2 918.6,829.6 919.1,832.0 919.6,834.4 920.1,836.7 920.6,839.0 921.1,841.3 921.6,843.6 922.1,845.9 922.6,848.1 923.1,850.3 923.6,852.5 924.1,854.6 924.6,856.7 925.1,858.8 925.6,860.9 926.1,862.9 926.6,864.9 927.1,866.9 927.6,868.9 928.1,870.8 928.6,872.7 929.1,874.6 929.6,876.4 930.1,878.2 930.6,880.0 931.1,881.8 931.6,883.5 932.1,885.2 932.6,886.9 933.1,888.6 933.6,890.2 934.1,891.8 934.6,893.3 935.1,894.8 935.6,896.4 936.1,897.8 936.6,899.3 937.1,900.7 937.6,902.1 938.1,903.4 938.6,904.8 939.1,906.1 939.6,907.4 940.1,908.6 940.6,909.8 941.1,911.0 941.6,912.2 942.1,913.4 942.6,914.5 943.1,915.6 943.6,916.7 944.1,917.7 944.6,918.7 945.1,919.7 945.6,920.7 946.1,921.7 946.6,922.6 947.1,923.5 947.6,924.4 948.1,925.2 948.6,926.1 949.1,926.9 949.6,927.7 950.1,928.5 950.6,929.2 951.1,930.0 951.6,930.7 952.1,931.4 952.6,932.0 953.1,932.7 953.6,933.3 954.1,934.0 954.6,934.6 955.1,935.1 955.6,935.7 956.1,936.3 956.6,936.8 957.1,937.3 957.6,937.8 958.1,938.3 958.6,938.8 959.1,939.2 959.6,939.7 960.1,940.1 960.6,940.5 961.1,940.9 961.6,941.3 962.1,941.7 962.6,942.1 963.1,942.4 963.6,942.8 964.1,943.1 964.6,943.4 965.1,943.7 965.6,944.0 966.1,944.3 966.6,944.6 967.1,944.9 967.6,945.1 968.1,945.4 968.6,945.6 969.1,945.9 969.6,946.1 970.1,946.3 970.6,946.5 971.1,946.7 971.6,946.9 972.1,947.1 972.6,947.3 973.1,947.5 973.6,947.6 974.1,947.8 974.6,947.9 975.1,948.1 975.6,948.2 976.1,948.4 976.6,948.5 977.1,948.6 977.6,948.8 978.1,948.9 978.6,949.0 979.1,949.1 979.6,949.2 980.1,949.3 980.6,949.4 981.1,949.5 981.6,949.6 982.1,949.7 982.6,949.7 983.1,949.8 983.6,949.9 984.1,950.0 984.6,950.0 985.1,950.1 985.6,950.2 986.1,950.2 986.6,950.3 987.1,950.3 987.6,950.4 988.1,950.4 988.6,950.5 989.1,950.5 989.6,950.6 990.1,950.6 990.6,950.6 991.1,950.7 991.6,950.7 992.1,950.8" fill="none" stroke="#ff0000" stroke-width="1" shape-rendering="crispEdges"/>
</svg>
<div class="a" style="left:1052px;top:105px;width:853px;height:438px;border:1px solid #666;overflow:hidden">
<div class="a" style="left:0;top:0;width:80px;height:27px;background:#f2f2f2;border-bottom:1px solid #fdebe3;border-right:1px solid #fdebe3"></div>
<div class="a" style="left:80px;top:0;width:400px;height:27px;background:#fffde6;border-bottom:1px solid #fdebe3;border-right:1px solid #fdebe3"></div>
<div class="t" style="left:3px;top:9px;font-size:12px;color:#111">参数名称</div>
<div class="t" style="left:83px;top:9px;font-size:12.5px;color:#111;letter-spacing:-0.15px">平行距 16: 间距 (B1,B1,T2,#04,李一,#03)</div>
<div class="a" style="left:0px;top:27px;width:80px;height:27px;background:#fff;border-bottom:1px solid #fdebe3;border-right:1px solid #fdebe3"></div>
<div class="t" style="left:3px;top:36px;font-size:12px;color:#2a56a8">总样本数</div>
<div class="a" style="left:80px;top:27px;width:80px;height:27px;background:#fff;border-bottom:1px solid #fdebe3;border-right:1px solid #fdebe3"></div>
<div class="t" style="left:83px;top:36px;font-size:12.5px;color:#111">12</div>
<div class="a" style="left:160px;top:27px;width:80px;height:27px;background:#fff;border-bottom:1px solid #fdebe3;border-right:1px solid #fdebe3"></div>
<div class="t" style="left:163px;top:36px;font-size:12px;color:#2a56a8">子组大小</div>
<div class="a" style="left:240px;top:27px;width:80px;height:27px;background:#fff;border-bottom:1px solid #fdebe3;border-right:1px solid #fdebe3"></div>
<div class="t" style="left:243px;top:36px;font-size:12.5px;color:#111">1</div>
<div class="a" style="left:320px;top:27px;width:80px;height:27px;background:#fff;border-bottom:1px solid #fdebe3;border-right:1px solid #fdebe3"></div>
<div class="a" style="left:400px;top:27px;width:80px;height:27px;background:#fff;border-bottom:1px solid #fdebe3;border-right:1px solid #fdebe3"></div>
<div class="a" style="left:0px;top:54px;width:80px;height:27px;background:#fffde6;border-bottom:1px solid #fdebe3;border-right:1px solid #fdebe3"></div>
<div class="t" style="left:3px;top:63px;font-size:12px;color:#2a56a8">平均值</div>
<div class="a" style="left:80px;top:54px;width:80px;height:27px;background:#fffde6;border-bottom:1px solid #fdebe3;border-right:1px solid #fdebe3"></div>
<div class="t" style="left:83px;top:63px;font-size:12.5px;color:#111">6.5266</div>
<div class="a" style="left:160px;top:54px;width:80px;height:27px;background:#fffde6;border-bottom:1px solid #fdebe3;border-right:1px solid #fdebe3"></div>
<div class="t" style="left:163px;top:63px;font-size:12px;color:#2a56a8">最大值</div>
<div class="a" style="left:240px;top:54px;width:80px;height:27px;background:#fffde6;border-bottom:1px solid #fdebe3;border-right:1px solid #fdebe3"></div>
<div class="t" style="left:243px;top:63px;font-size:12.5px;color:#111">6.54</div>
<div class="a" style="left:320px;top:54px;width:80px;height:27px;background:#fffde6;border-bottom:1px solid #fdebe3;border-right:1px solid #fdebe3"></div>
<div class="t" style="left:323px;top:63px;font-size:12px;color:#2a56a8">最小值</div>
<div class="a" style="left:400px;top:54px;width:80px;height:27px;background:#fffde6;border-bottom:1px solid #fdebe3;border-right:1px solid #fdebe3"></div>
<div class="t" style="left:403px;top:63px;font-size:12.5px;color:#111">6.515</div>
<div class="a" style="left:0px;top:81px;width:80px;height:27px;background:#fff;border-bottom:1px solid #fdebe3;border-right:1px solid #fdebe3"></div>
<div class="t" style="left:3px;top:90px;font-size:12px;color:#2a56a8">上规格</div>
<div class="a" style="left:80px;top:81px;width:80px;height:27px;background:#fff;border-bottom:1px solid #fdebe3;border-right:1px solid #fdebe3"></div>
<div class="t" style="left:83px;top:90px;font-size:12.5px;color:#111">6.555</div>
<div class="a" style="left:160px;top:81px;width:80px;height:27px;background:#fff;border-bottom:1px solid #fdebe3;border-right:1px solid #fdebe3"></div>
<div class="t" style="left:163px;top:90px;font-size:12px;color:#2a56a8">目标值</div>
<div class="a" style="left:240px;top:81px;width:80px;height:27px;background:#fff;border-bottom:1px solid #fdebe3;border-right:1px solid #fdebe3"></div>
<div class="t" style="left:243px;top:90px;font-size:12.5px;color:#111">6.5</div>
<div class="a" style="left:320px;top:81px;width:80px;height:27px;background:#fff;border-bottom:1px solid #fdebe3;border-right:1px solid #fdebe3"></div>
<div class="t" style="left:323px;top:90px;font-size:12px;color:#2a56a8">下规格</div>
<div class="a" style="left:400px;top:81px;width:80px;height:27px;background:#fff;border-bottom:1px solid #fdebe3;border-right:1px solid #fdebe3"></div>
<div class="t" style="left:403px;top:90px;font-size:12.5px;color:#111">6.445</div>
<div class="a" style="left:0px;top:108px;width:80px;height:27px;background:#fffde6;border-bottom:1px solid #fdebe3;border-right:1px solid #fdebe3"></div>
<div class="t" style="left:3px;top:117px;font-size:12.5px;color:#2a56a8">+3Sigma</div>
<div class="a" style="left:80px;top:108px;width:80px;height:27px;background:#fffde6;border-bottom:1px solid #fdebe3;border-right:1px solid #fdebe3"></div>
<div class="t" style="left:83px;top:117px;font-size:12.5px;color:#111">6.545</div>
<div class="a" style="left:160px;top:108px;width:80px;height:27px;background:#fffde6;border-bottom:1px solid #fdebe3;border-right:1px solid #fdebe3"></div>
<div class="t" style="left:163px;top:117px;font-size:12.5px;color:#2a56a8">-3Sigma</div>
<div class="a" style="left:240px;top:108px;width:80px;height:27px;background:#fffde6;border-bottom:1px solid #fdebe3;border-right:1px solid #fdebe3"></div>
<div class="t" style="left:243px;top:117px;font-size:12.5px;color:#111">6.508</div>
<div class="a" style="left:320px;top:108px;width:80px;height:27px;background:#fffde6;border-bottom:1px solid #fdebe3;border-right:1px solid #fdebe3"></div>
<div class="a" style="left:400px;top:108px;width:80px;height:27px;background:#fffde6;border-bottom:1px solid #fdebe3;border-right:1px solid #fdebe3"></div>
<div class="a" style="left:0px;top:135px;width:480px;height:27px;background:#fff;border-bottom:1px solid #fdebe3;border-right:1px solid #fdebe3"></div>
<div class="a" style="left:0px;top:162px;width:80px;height:27px;background:#fffde6;border-bottom:1px solid #fdebe3;border-right:1px solid #fdebe3"></div>
<div class="a" style="left:80px;top:162px;width:160px;height:27px;background:#fffde6;border-bottom:1px solid #fdebe3;border-right:1px solid #fdebe3"></div>
<div class="t" style="left:83px;top:171px;font-size:12px;color:#2a56a8">组内</div>
<div class="a" style="left:240px;top:162px;width:160px;height:27px;background:#fffde6;border-bottom:1px solid #fdebe3;border-right:1px solid #fdebe3"></div>
<div class="t" style="left:243px;top:171px;font-size:12px;color:#2a56a8">整体</div>
<div class="a" style="left:400px;top:162px;width:80px;height:27px;background:#fffde6;border-bottom:1px solid #fdebe3;border-right:1px solid #fdebe3"></div>
<div class="a" style="left:0px;top:189px;width:80px;height:27px;background:#fff;border-bottom:1px solid #fdebe3;border-right:1px solid #fdebe3"></div>
<div class="t" style="left:3px;top:198px;font-size:12.5px;color:#2a56a8">STDEV</div>
<div class="a" style="left:80px;top:189px;width:160px;height:27px;background:#fff;border-bottom:1px solid #fdebe3;border-right:1px solid #fdebe3"></div>
<div class="t" style="left:83px;top:198px;font-size:12.5px;color:#111">0.006077</div>
<div class="a" style="left:240px;top:189px;width:160px;height:27px;background:#fff;border-bottom:1px solid #fdebe3;border-right:1px solid #fdebe3"></div>
<div class="t" style="left:243px;top:198px;font-size:12.5px;color:#111">0.005792</div>
<div class="a" style="left:400px;top:189px;width:80px;height:27px;background:#fff;border-bottom:1px solid #fdebe3;border-right:1px solid #fdebe3"></div>
<div class="a" style="left:0px;top:216px;width:80px;height:27px;background:#fffde6;border-bottom:1px solid #fdebe3;border-right:1px solid #fdebe3"></div>
<div class="t" style="left:3px;top:225px;font-size:12.5px;color:#2a56a8">CPK</div>
<div class="a" style="left:80px;top:216px;width:160px;height:27px;background:#fffde6;border-bottom:1px solid #fdebe3;border-right:1px solid #fdebe3"></div>
<div class="t" style="left:83px;top:225px;font-size:12.5px;color:#111">1.559</div>
<div class="a" style="left:240px;top:216px;width:160px;height:27px;background:#fffde6;border-bottom:1px solid #fdebe3;border-right:1px solid #fdebe3"></div>
<div class="t" style="left:243px;top:225px;font-size:12.5px;color:#111">1.635</div>
<div class="a" style="left:400px;top:216px;width:80px;height:27px;background:#fffde6;border-bottom:1px solid #fdebe3;border-right:1px solid #fdebe3"></div>
<div class="a" style="left:0px;top:243px;width:80px;height:27px;background:#fff;border-bottom:1px solid #fdebe3;border-right:1px solid #fdebe3"></div>
<div class="t" style="left:3px;top:252px;font-size:12.5px;color:#2a56a8">CP</div>
<div class="a" style="left:80px;top:243px;width:160px;height:27px;background:#fff;border-bottom:1px solid #fdebe3;border-right:1px solid #fdebe3"></div>
<div class="t" style="left:83px;top:252px;font-size:12.5px;color:#111">3.017</div>
<div class="a" style="left:240px;top:243px;width:160px;height:27px;background:#fff;border-bottom:1px solid #fdebe3;border-right:1px solid #fdebe3"></div>
<div class="t" style="left:243px;top:252px;font-size:12.5px;color:#111">3.165</div>
<div class="a" style="left:400px;top:243px;width:80px;height:27px;background:#fff;border-bottom:1px solid #fdebe3;border-right:1px solid #fdebe3"></div>
<div class="a" style="left:0px;top:270px;width:80px;height:27px;background:#fffde6;border-bottom:1px solid #fdebe3;border-right:1px solid #fdebe3"></div>
<div class="t" style="left:3px;top:279px;font-size:12.5px;color:#2a56a8">CPL</div>
<div class="a" style="left:80px;top:270px;width:160px;height:27px;background:#fffde6;border-bottom:1px solid #fdebe3;border-right:1px solid #fdebe3"></div>
<div class="t" style="left:83px;top:279px;font-size:12.5px;color:#111">4.475</div>
<div class="a" style="left:240px;top:270px;width:160px;height:27px;background:#fffde6;border-bottom:1px solid #fdebe3;border-right:1px solid #fdebe3"></div>
<div class="t" style="left:243px;top:279px;font-size:12.5px;color:#111">4.695</div>
<div class="a" style="left:400px;top:270px;width:80px;height:27px;background:#fffde6;border-bottom:1px solid #fdebe3;border-right:1px solid #fdebe3"></div>
<div class="a" style="left:0px;top:297px;width:80px;height:27px;background:#fff;border-bottom:1px solid #fdebe3;border-right:1px solid #fdebe3"></div>
<div class="t" style="left:3px;top:306px;font-size:12.5px;color:#2a56a8">CPU</div>
<div class="a" style="left:80px;top:297px;width:160px;height:27px;background:#fff;border-bottom:1px solid #fdebe3;border-right:1px solid #fdebe3"></div>
<div class="t" style="left:83px;top:306px;font-size:12.5px;color:#111">1.559</div>
<div class="a" style="left:240px;top:297px;width:160px;height:27px;background:#fff;border-bottom:1px solid #fdebe3;border-right:1px solid #fdebe3"></div>
<div class="t" style="left:243px;top:306px;font-size:12.5px;color:#111">1.635</div>
<div class="a" style="left:400px;top:297px;width:80px;height:27px;background:#fff;border-bottom:1px solid #fdebe3;border-right:1px solid #fdebe3"></div>
<div class="a" style="left:0px;top:324px;width:80px;height:27px;background:#fffde6;border-bottom:1px solid #fdebe3;border-right:1px solid #fdebe3"></div>
<div class="t" style="left:3px;top:333px;font-size:12.5px;color:#2a56a8">PPM &lt; LSL</div>
<div class="a" style="left:80px;top:324px;width:160px;height:27px;background:#fffde6;border-bottom:1px solid #fdebe3;border-right:1px solid #fdebe3"></div>
<div class="t" style="left:83px;top:333px;font-size:12.5px;color:#111">0</div>
<div class="a" style="left:240px;top:324px;width:160px;height:27px;background:#fffde6;border-bottom:1px solid #fdebe3;border-right:1px solid #fdebe3"></div>
<div class="t" style="left:243px;top:333px;font-size:12.5px;color:#111">0</div>
<div class="a" style="left:400px;top:324px;width:80px;height:27px;background:#fffde6;border-bottom:1px solid #fdebe3;border-right:1px solid #fdebe3"></div>
<div class="t" style="left:403px;top:333px;font-size:12.5px;color:#111">0</div>
<div class="a" style="left:0px;top:351px;width:80px;height:27px;background:#fff;border-bottom:1px solid #fdebe3;border-right:1px solid #fdebe3"></div>
<div class="t" style="left:3px;top:360px;font-size:12.5px;color:#2a56a8">PPM &gt; USL</div>
<div class="a" style="left:80px;top:351px;width:160px;height:27px;background:#fff;border-bottom:1px solid #fdebe3;border-right:1px solid #fdebe3"></div>
<div class="t" style="left:83px;top:360px;font-size:12.5px;color:#111">1.49</div>
<div class="a" style="left:240px;top:351px;width:160px;height:27px;background:#fff;border-bottom:1px solid #fdebe3;border-right:1px solid #fdebe3"></div>
<div class="t" style="left:243px;top:360px;font-size:12.5px;color:#111">0.477</div>
<div class="a" style="left:400px;top:351px;width:80px;height:27px;background:#fff;border-bottom:1px solid #fdebe3;border-right:1px solid #fdebe3"></div>
<div class="t" style="left:403px;top:360px;font-size:12.5px;color:#111">0</div>
<div class="a" style="left:0px;top:378px;width:80px;height:27px;background:#fffde6;border-bottom:1px solid #fdebe3;border-right:1px solid #fdebe3"></div>
<div class="t" style="left:3px;top:387px;font-size:12.5px;color:#2a56a8">PPM Total</div>
<div class="a" style="left:80px;top:378px;width:160px;height:27px;background:#fffde6;border-bottom:1px solid #fdebe3;border-right:1px solid #fdebe3"></div>
<div class="t" style="left:83px;top:387px;font-size:12.5px;color:#111">1.49</div>
<div class="a" style="left:240px;top:378px;width:160px;height:27px;background:#fffde6;border-bottom:1px solid #fdebe3;border-right:1px solid #fdebe3"></div>
<div class="t" style="left:243px;top:387px;font-size:12.5px;color:#111">0.477</div>
<div class="a" style="left:400px;top:378px;width:80px;height:27px;background:#fffde6;border-bottom:1px solid #fdebe3;border-right:1px solid #fdebe3"></div>
<div class="t" style="left:403px;top:387px;font-size:12.5px;color:#111">0</div>
<div class="a" style="left:0px;top:405px;width:480px;height:27px;background:#fff;border-bottom:1px solid #fdebe3;border-right:1px solid #fdebe3"></div>
<div class="a" style="left:0px;top:432px;width:80px;height:27px;background:#fffde6;border-bottom:1px solid #fdebe3;border-right:1px solid #fdebe3"></div>
<div class="a" style="left:80px;top:432px;width:80px;height:27px;background:#fffde6;border-bottom:1px solid #fdebe3;border-right:1px solid #fdebe3"></div>
<div class="a" style="left:160px;top:432px;width:80px;height:27px;background:#fffde6;border-bottom:1px solid #fdebe3;border-right:1px solid #fdebe3"></div>
<div class="a" style="left:240px;top:432px;width:80px;height:27px;background:#fffde6;border-bottom:1px solid #fdebe3;border-right:1px solid #fdebe3"></div>
<div class="a" style="left:320px;top:432px;width:80px;height:27px;background:#fffde6;border-bottom:1px solid #fdebe3;border-right:1px solid #fdebe3"></div>
<div class="a" style="left:400px;top:432px;width:80px;height:27px;background:#fffde6;border-bottom:1px solid #fdebe3;border-right:1px solid #fdebe3"></div>
<div class="a" style="left:835px;top:0;width:16px;height:436px;background:#efefef"></div>
</div>
<div class="a" style="left:1052px;top:549px;width:853px;height:438px;border:1px solid #666;overflow:hidden">
<div class="a" style="left:0;top:0;width:80px;height:27px;background:#f2f2f2;border-bottom:1px solid #fdebe3;border-right:1px solid #fdebe3"></div>
<div class="a" style="left:80px;top:0;width:400px;height:27px;background:#fffde6;border-bottom:1px solid #fdebe3;border-right:1px solid #fdebe3"></div>
<div class="t" style="left:3px;top:9px;font-size:12px;color:#2a56a8">参数名称</div>
<div class="t" style="left:83px;top:9px;font-size:12.5px;color:#111;letter-spacing:-0.15px">平行距 18: 间距 (B1,B1,T2,#04,李一,#03)</div>
<div class="a" style="left:0px;top:27px;width:80px;height:27px;background:#fff;border-bottom:1px solid #fdebe3;border-right:1px solid #fdebe3"></div>
<div class="t" style="left:3px;top:36px;font-size:12px;color:#2a56a8">总样本数</div>
<div class="a" style="left:80px;top:27px;width:80px;height:27px;background:#fff;border-bottom:1px solid #fdebe3;border-right:1px solid #fdebe3"></div>
<div class="t" style="left:83px;top:36px;font-size:12.5px;color:#111">12</div>
<div class="a" style="left:160px;top:27px;width:80px;height:27px;background:#fff;border-bottom:1px solid #fdebe3;border-right:1px solid #fdebe3"></div>
<div class="t" style="left:163px;top:36px;font-size:12px;color:#2a56a8">子组大小</div>
<div class="a" style="left:240px;top:27px;width:80px;height:27px;background:#fff;border-bottom:1px solid #fdebe3;border-right:1px solid #fdebe3"></div>
<div class="t" style="left:243px;top:36px;font-size:12.5px;color:#111">1</div>
<div class="a" style="left:320px;top:27px;width:80px;height:27px;background:#fff;border-bottom:1px solid #fdebe3;border-right:1px solid #fdebe3"></div>
<div class="a" style="left:400px;top:27px;width:80px;height:27px;background:#fff;border-bottom:1px solid #fdebe3;border-right:1px solid #fdebe3"></div>
<div class="a" style="left:0px;top:54px;width:80px;height:27px;background:#fffde6;border-bottom:1px solid #fdebe3;border-right:1px solid #fdebe3"></div>
<div class="t" style="left:3px;top:63px;font-size:12px;color:#2a56a8">平均值</div>
<div class="a" style="left:80px;top:54px;width:80px;height:27px;background:#fffde6;border-bottom:1px solid #fdebe3;border-right:1px solid #fdebe3"></div>
<div class="t" style="left:83px;top:63px;font-size:12.5px;color:#111">6.5258</div>
<div class="a" style="left:160px;top:54px;width:80px;height:27px;background:#fffde6;border-bottom:1px solid #fdebe3;border-right:1px solid #fdebe3"></div>
<div class="t" style="left:163px;top:63px;font-size:12px;color:#2a56a8">最大值</div>
<div class="a" style="left:240px;top:54px;width:80px;height:27px;background:#fffde6;border-bottom:1px solid #fdebe3;border-right:1px solid #fdebe3"></div>
<div class="t" style="left:243px;top:63px;font-size:12.5px;color:#111">6.535</div>
<div class="a" style="left:320px;top:54px;width:80px;height:27px;background:#fffde6;border-bottom:1px solid #fdebe3;border-right:1px solid #fdebe3"></div>
<div class="t" style="left:323px;top:63px;font-size:12px;color:#2a56a8">最小值</div>
<div class="a" style="left:400px;top:54px;width:80px;height:27px;background:#fffde6;border-bottom:1px solid #fdebe3;border-right:1px solid #fdebe3"></div>
<div class="t" style="left:403px;top:63px;font-size:12.5px;color:#111">6.501</div>
<div class="a" style="left:0px;top:81px;width:80px;height:27px;background:#fff;border-bottom:1px solid #fdebe3;border-right:1px solid #fdebe3"></div>
<div class="t" style="left:3px;top:90px;font-size:12px;color:#2a56a8">上规格</div>
<div class="a" style="left:80px;top:81px;width:80px;height:27px;background:#fff;border-bottom:1px solid #fdebe3;border-right:1px solid #fdebe3"></div>
<div class="t" style="left:83px;top:90px;font-size:12.5px;color:#111">6.555</div>
<div class="a" style="left:160px;top:81px;width:80px;height:27px;background:#fff;border-bottom:1px solid #fdebe3;border-right:1px solid #fdebe3"></div>
<div class="t" style="left:163px;top:90px;font-size:12px;color:#2a56a8">目标值</div>
<div class="a" style="left:240px;top:81px;width:80px;height:27px;background:#fff;border-bottom:1px solid #fdebe3;border-right:1px solid #fdebe3"></div>
<div class="t" style="left:243px;top:90px;font-size:12.5px;color:#111">6.5</div>
<div class="a" style="left:320px;top:81px;width:80px;height:27px;background:#fff;border-bottom:1px solid #fdebe3;border-right:1px solid #fdebe3"></div>
<div class="t" style="left:323px;top:90px;font-size:12px;color:#2a56a8">下规格</div>
<div class="a" style="left:400px;top:81px;width:80px;height:27px;background:#fff;border-bottom:1px solid #fdebe3;border-right:1px solid #fdebe3"></div>
<div class="t" style="left:403px;top:90px;font-size:12.5px;color:#111">6.445</div>
<div class="a" style="left:0px;top:108px;width:80px;height:27px;background:#fffde6;border-bottom:1px solid #fdebe3;border-right:1px solid #fdebe3"></div>
<div class="t" style="left:3px;top:117px;font-size:12.5px;color:#2a56a8">+3Sigma</div>
<div class="a" style="left:80px;top:108px;width:80px;height:27px;background:#fffde6;border-bottom:1px solid #fdebe3;border-right:1px solid #fdebe3"></div>
<div class="t" style="left:83px;top:117px;font-size:12.5px;color:#111">6.566</div>
<div class="a" style="left:160px;top:108px;width:80px;height:27px;background:#fffde6;border-bottom:1px solid #fdebe3;border-right:1px solid #fdebe3"></div>
<div class="t" style="left:163px;top:117px;font-size:12.5px;color:#2a56a8">-3Sigma</div>
<div class="a" style="left:240px;top:108px;width:80px;height:27px;background:#fffde6;border-bottom:1px solid #fdebe3;border-right:1px solid #fdebe3"></div>
<div class="t" style="left:243px;top:117px;font-size:12.5px;color:#111">6.486</div>
<div class="a" style="left:320px;top:108px;width:80px;height:27px;background:#fffde6;border-bottom:1px solid #fdebe3;border-right:1px solid #fdebe3"></div>
<div class="a" style="left:400px;top:108px;width:80px;height:27px;background:#fffde6;border-bottom:1px solid #fdebe3;border-right:1px solid #fdebe3"></div>
<div class="a" style="left:0px;top:135px;width:480px;height:27px;background:#fff;border-bottom:1px solid #fdebe3;border-right:1px solid #fdebe3"></div>
<div class="a" style="left:0px;top:162px;width:80px;height:27px;background:#fffde6;border-bottom:1px solid #fdebe3;border-right:1px solid #fdebe3"></div>
<div class="a" style="left:80px;top:162px;width:160px;height:27px;background:#fffde6;border-bottom:1px solid #fdebe3;border-right:1px solid #fdebe3"></div>
<div class="t" style="left:83px;top:171px;font-size:12px;color:#2a56a8">组内</div>
<div class="a" style="left:240px;top:162px;width:160px;height:27px;background:#fffde6;border-bottom:1px solid #fdebe3;border-right:1px solid #fdebe3"></div>
<div class="t" style="left:243px;top:171px;font-size:12px;color:#2a56a8">整体</div>
<div class="a" style="left:400px;top:162px;width:80px;height:27px;background:#fffde6;border-bottom:1px solid #fdebe3;border-right:1px solid #fdebe3"></div>
<div class="a" style="left:0px;top:189px;width:80px;height:27px;background:#fff;border-bottom:1px solid #fdebe3;border-right:1px solid #fdebe3"></div>
<div class="t" style="left:3px;top:198px;font-size:12.5px;color:#2a56a8">STDEV</div>
<div class="a" style="left:80px;top:189px;width:160px;height:27px;background:#fff;border-bottom:1px solid #fdebe3;border-right:1px solid #fdebe3"></div>
<div class="t" style="left:83px;top:198px;font-size:12.5px;color:#111">0.01337</div>
<div class="a" style="left:240px;top:189px;width:160px;height:27px;background:#fff;border-bottom:1px solid #fdebe3;border-right:1px solid #fdebe3"></div>
<div class="t" style="left:243px;top:198px;font-size:12.5px;color:#111">0.012132</div>
<div class="a" style="left:400px;top:189px;width:80px;height:27px;background:#fff;border-bottom:1px solid #fdebe3;border-right:1px solid #fdebe3"></div>
<div class="a" style="left:0px;top:216px;width:80px;height:27px;background:#fffde6;border-bottom:1px solid #fdebe3;border-right:1px solid #fdebe3"></div>
<div class="t" style="left:3px;top:225px;font-size:12.5px;color:#2a56a8">CPK</div>
<div class="a" style="left:80px;top:216px;width:160px;height:27px;background:#fffde6;border-bottom:1px solid #fdebe3;border-right:1px solid #fdebe3"></div>
<div class="t" style="left:83px;top:225px;font-size:12.5px;color:#111">0.728</div>
<div class="a" style="left:240px;top:216px;width:160px;height:27px;background:#fffde6;border-bottom:1px solid #fdebe3;border-right:1px solid #fdebe3"></div>
<div class="t" style="left:243px;top:225px;font-size:12.5px;color:#111">0.803</div>
<div class="a" style="left:400px;top:216px;width:80px;height:27px;background:#fffde6;border-bottom:1px solid #fdebe3;border-right:1px solid #fdebe3"></div>
<div class="a" style="left:0px;top:243px;width:80px;height:27px;background:#fff;border-bottom:1px solid #fdebe3;border-right:1px solid #fdebe3"></div>
<div class="t" style="left:3px;top:252px;font-size:12.5px;color:#2a56a8">CP</div>
<div class="a" style="left:80px;top:243px;width:160px;height:27px;background:#fff;border-bottom:1px solid #fdebe3;border-right:1px solid #fdebe3"></div>
<div class="t" style="left:83px;top:252px;font-size:12.5px;color:#111">1.371</div>
<div class="a" style="left:240px;top:243px;width:160px;height:27px;background:#fff;border-bottom:1px solid #fdebe3;border-right:1px solid #fdebe3"></div>
<div class="t" style="left:243px;top:252px;font-size:12.5px;color:#111">1.511</div>
<div class="a" style="left:400px;top:243px;width:80px;height:27px;background:#fff;border-bottom:1px solid #fdebe3;border-right:1px solid #fdebe3"></div>
<div class="a" style="left:0px;top:270px;width:80px;height:27px;background:#fffde6;border-bottom:1px solid #fdebe3;border-right:1px solid #fdebe3"></div>
<div class="t" style="left:3px;top:279px;font-size:12.5px;color:#2a56a8">CPL</div>
<div class="a" style="left:80px;top:270px;width:160px;height:27px;background:#fffde6;border-bottom:1px solid #fdebe3;border-right:1px solid #fdebe3"></div>
<div class="t" style="left:83px;top:279px;font-size:12.5px;color:#111">2.014</div>
<div class="a" style="left:240px;top:270px;width:160px;height:27px;background:#fffde6;border-bottom:1px solid #fdebe3;border-right:1px solid #fdebe3"></div>
<div class="t" style="left:243px;top:279px;font-size:12.5px;color:#111">2.22</div>
<div class="a" style="left:400px;top:270px;width:80px;height:27px;background:#fffde6;border-bottom:1px solid #fdebe3;border-right:1px solid #fdebe3"></div>
<div class="a" style="left:0px;top:297px;width:80px;height:27px;background:#fff;border-bottom:1px solid #fdebe3;border-right:1px solid #fdebe3"></div>
<div class="t" style="left:3px;top:306px;font-size:12.5px;color:#2a56a8">CPU</div>
<div class="a" style="left:80px;top:297px;width:160px;height:27px;background:#fff;border-bottom:1px solid #fdebe3;border-right:1px solid #fdebe3"></div>
<div class="t" style="left:83px;top:306px;font-size:12.5px;color:#111">0.728</div>
<div class="a" style="left:240px;top:297px;width:160px;height:27px;background:#fff;border-bottom:1px solid #fdebe3;border-right:1px solid #fdebe3"></div>
<div class="t" style="left:243px;top:306px;font-size:12.5px;color:#111">0.803</div>
<div class="a" style="left:400px;top:297px;width:80px;height:27px;background:#fff;border-bottom:1px solid #fdebe3;border-right:1px solid #fdebe3"></div>
<div class="a" style="left:0px;top:324px;width:80px;height:27px;background:#fffde6;border-bottom:1px solid #fdebe3;border-right:1px solid #fdebe3"></div>
<div class="t" style="left:3px;top:333px;font-size:12.5px;color:#2a56a8">PPM &lt; LSL</div>
<div class="a" style="left:80px;top:324px;width:160px;height:27px;background:#fffde6;border-bottom:1px solid #fdebe3;border-right:1px solid #fdebe3"></div>
<div class="t" style="left:83px;top:333px;font-size:12.5px;color:#111">0.001</div>
<div class="a" style="left:240px;top:324px;width:160px;height:27px;background:#fffde6;border-bottom:1px solid #fdebe3;border-right:1px solid #fdebe3"></div>
<div class="t" style="left:243px;top:333px;font-size:12.5px;color:#111">0</div>
<div class="a" style="left:400px;top:324px;width:80px;height:27px;background:#fffde6;border-bottom:1px solid #fdebe3;border-right:1px solid #fdebe3"></div>
<div class="t" style="left:403px;top:333px;font-size:12.5px;color:#111">0</div>
<div class="a" style="left:0px;top:351px;width:80px;height:27px;background:#fff;border-bottom:1px solid #fdebe3;border-right:1px solid #fdebe3"></div>
<div class="t" style="left:3px;top:360px;font-size:12.5px;color:#2a56a8">PPM &gt; USL</div>
<div class="a" style="left:80px;top:351px;width:160px;height:27px;background:#fff;border-bottom:1px solid #fdebe3;border-right:1px solid #fdebe3"></div>
<div class="t" style="left:83px;top:360px;font-size:12.5px;color:#111">14439.046</div>
<div class="a" style="left:240px;top:351px;width:160px;height:27px;background:#fff;border-bottom:1px solid #fdebe3;border-right:1px solid #fdebe3"></div>
<div class="t" style="left:243px;top:360px;font-size:12.5px;color:#111">8016.586</div>
<div class="a" style="left:400px;top:351px;width:80px;height:27px;background:#fff;border-bottom:1px solid #fdebe3;border-right:1px solid #fdebe3"></div>
<div class="t" style="left:403px;top:360px;font-size:12.5px;color:#111">0</div>
<div class="a" style="left:0px;top:378px;width:80px;height:27px;background:#fffde6;border-bottom:1px solid #fdebe3;border-right:1px solid #fdebe3"></div>
<div class="t" style="left:3px;top:387px;font-size:12.5px;color:#2a56a8">PPM Total</div>
<div class="a" style="left:80px;top:378px;width:160px;height:27px;background:#fffde6;border-bottom:1px solid #fdebe3;border-right:1px solid #fdebe3"></div>
<div class="t" style="left:83px;top:387px;font-size:12.5px;color:#111">14439.047</div>
<div class="a" style="left:240px;top:378px;width:160px;height:27px;background:#fffde6;border-bottom:1px solid #fdebe3;border-right:1px solid #fdebe3"></div>
<div class="t" style="left:243px;top:387px;font-size:12.5px;color:#111">8016.586</div>
<div class="a" style="left:400px;top:378px;width:80px;height:27px;background:#fffde6;border-bottom:1px solid #fdebe3;border-right:1px solid #fdebe3"></div>
<div class="t" style="left:403px;top:387px;font-size:12.5px;color:#111">0</div>
<div class="a" style="left:0px;top:405px;width:480px;height:27px;background:#fff;border-bottom:1px solid #fdebe3;border-right:1px solid #fdebe3"></div>
<div class="a" style="left:0px;top:432px;width:80px;height:27px;background:#fffde6;border-bottom:1px solid #fdebe3;border-right:1px solid #fdebe3"></div>
<div class="a" style="left:80px;top:432px;width:80px;height:27px;background:#fffde6;border-bottom:1px solid #fdebe3;border-right:1px solid #fdebe3"></div>
<div class="a" style="left:160px;top:432px;width:80px;height:27px;background:#fffde6;border-bottom:1px solid #fdebe3;border-right:1px solid #fdebe3"></div>
<div class="a" style="left:240px;top:432px;width:80px;height:27px;background:#fffde6;border-bottom:1px solid #fdebe3;border-right:1px solid #fdebe3"></div>
<div class="a" style="left:320px;top:432px;width:80px;height:27px;background:#fffde6;border-bottom:1px solid #fdebe3;border-right:1px solid #fdebe3"></div>
<div class="a" style="left:400px;top:432px;width:80px;height:27px;background:#fffde6;border-bottom:1px solid #fdebe3;border-right:1px solid #fdebe3"></div>
<div class="a" style="left:835px;top:0;width:16px;height:436px;background:#efefef"></div>
</div>
<div class="a" style="left:1895px;top:123px;width:2px;height:348px;background:#858585"></div>
<div class="a" style="left:1895px;top:567px;width:2px;height:348px;background:#858585"></div>
</body></html>
